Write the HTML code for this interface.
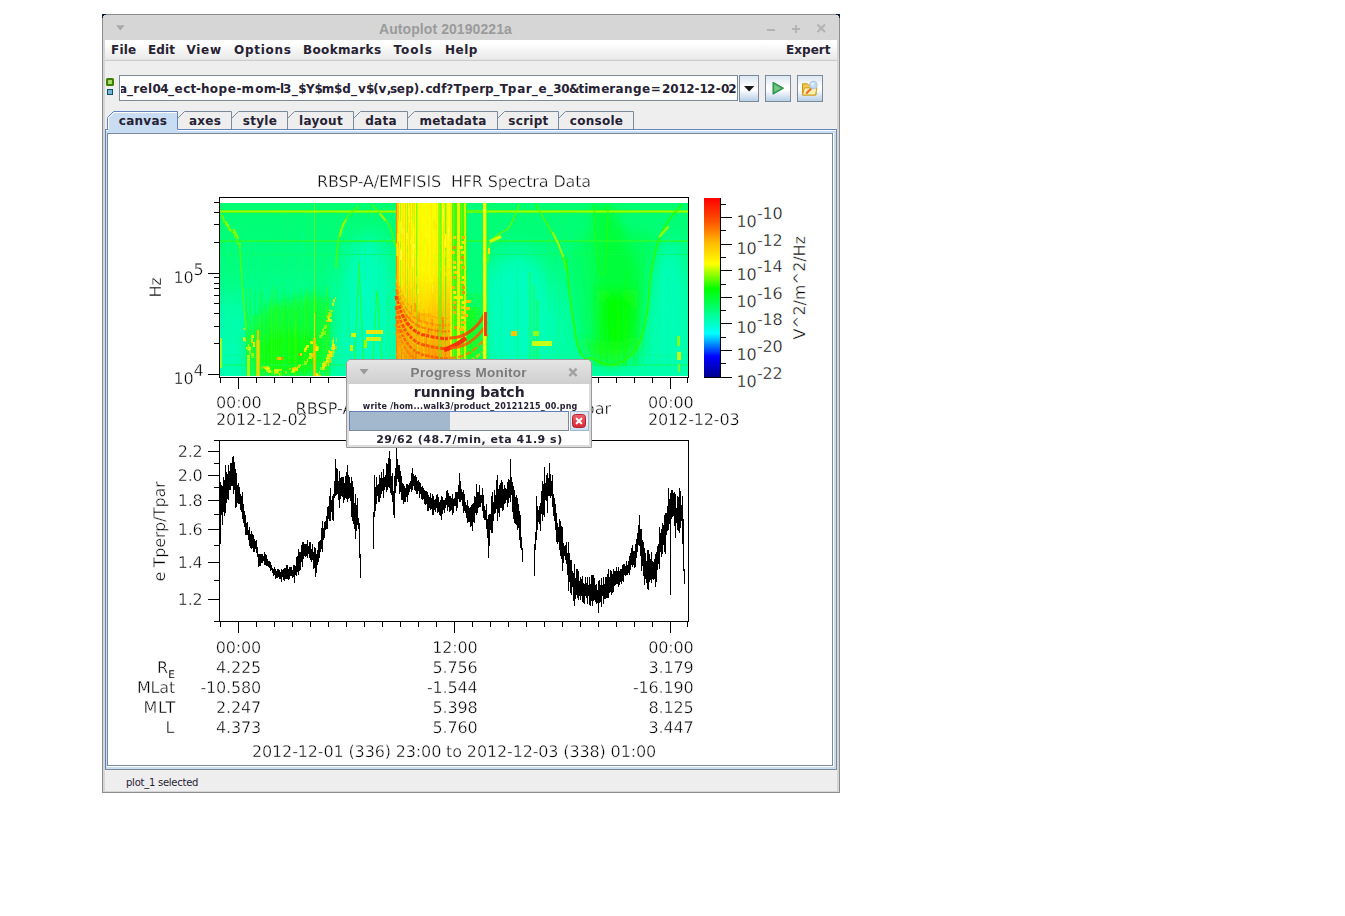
<!DOCTYPE html>
<html><head><meta charset="utf-8"><title>Autoplot 20190221a</title>
<style>
html,body{margin:0;padding:0;background:#fff;}
body{width:1345px;height:916px;position:relative;overflow:hidden;font-family:'DejaVu Sans','Liberation Sans',sans-serif;}
.a{position:absolute;}
#win{left:102px;top:14px;width:736px;height:777px;border:1px solid #8c8c8c;background:#d6d6d6;}
#inner{left:105px;top:40px;width:732px;height:751px;background:#eeeeee;}
#wt{left:379px;letter-spacing:0.08px;top:15px;width:200px;height:25px;text-align:left;color:#9b9b9b;font:bold 14px 'Liberation Sans','DejaVu Sans',sans-serif;line-height:28px;}
#menubar{left:105px;top:40px;width:732px;height:20px;background:linear-gradient(#ffffff,#ffffff 15%,#e9e9e9 95%,#dedede);border-bottom:1px solid #cccccc;}
.m{position:absolute;top:41px;height:20px;line-height:19px;font-weight:bold;font-size:12px;letter-spacing:0.22px;color:#262133;white-space:nowrap;}
.b{font-weight:bold;font-size:12px;color:#262133;white-space:nowrap;}
#url{left:119px;top:75px;width:617px;height:24px;border:1px solid #7a8a99;background:#fff;overflow:hidden;}
#url span{position:absolute;right:1px;top:0;line-height:25px;letter-spacing:0.3px;}
.btn{border:1px solid #7a8a99;background:linear-gradient(#dbe6f2,#ffffff 45%,#ffffff 55%,#b8cfe5);box-sizing:border-box;}
.tab{position:absolute;top:111px;height:19px;}
.tab span{position:absolute;left:0;right:0;top:1px;text-align:center;line-height:19px;letter-spacing:0.28px;}
#status{left:126px;top:777px;font-size:10px;color:#262133;line-height:12px;letter-spacing:-0.25px;}
#dlg{left:346px;top:359px;width:244px;height:87px;border:1px solid #9a9a9a;border-radius:5px 5px 0 0;background:#dcdcdc;}
#dlgt{left:347px;top:360px;width:244px;height:24px;border-radius:4px 4px 0 0;background:linear-gradient(#e4e4e4,#cfcfcf);}
#dlgc{left:349px;top:384px;width:240px;height:61px;background:#fff;}
</style></head>
<body>
<div class="a" id="win"></div>
<svg class="a" style="left:102px;top:14px" width="738" height="4" viewBox="0 0 738 4" shape-rendering="crispEdges"><path d="M0 0h4v1h-2v1h-1v2h-1z" fill="#0c1e3c"/><path d="M738 0h-4v1h2v1h1v2h1z" fill="#0c1e3c"/><path d="M1 1h3v0h-3z" fill="#fff"/></svg>
<div class="a" id="inner"></div>
<div class="a" id="wt">Autoplot 20190221a</div>
<svg class="a" style="left:102px;top:15px" width="738" height="25" viewBox="102 15 738 25"><path d="M116 25.3h8.6l-4.3 5.2z" fill="#a9a9a9"/><path d="M767 30h8" stroke="#b2b2b2" stroke-width="2"/><path d="M792 29h8M796 25v8" stroke="#b2b2b2" stroke-width="1.8"/><path d="M817.5 24.5l7.5 7.5M825 24.5l-7.5 7.5" stroke="#b2b2b2" stroke-width="2"/></svg>
<div class="a" id="menubar"></div>
<div class="m" style="left:111px;letter-spacing:0.2px">File</div>
<div class="m" style="left:148px;letter-spacing:0.1px">Edit</div>
<div class="m" style="left:186.5px;letter-spacing:0.7px">View</div>
<div class="m" style="left:234px;letter-spacing:0.7px">Options</div>
<div class="m" style="left:303px;letter-spacing:0.35px">Bookmarks</div>
<div class="m" style="left:393.5px;letter-spacing:1.0px">Tools</div>
<div class="m" style="left:445px;letter-spacing:0.5px">Help</div>
<div class="m" style="left:786px;letter-spacing:0.05px">Expert</div>
<div class="a" style="left:106px;top:78px;width:4px;height:4px;border:2px solid #3f7f00;background:#a6d96a;border-radius:1.5px"></div>
<div class="a" style="left:107px;top:89px;width:4px;height:4px;border:1px solid #0e4f6e;background:#79b4d6"></div>
<div class="a b" id="url"></div>
<svg class="a" style="left:121px;top:76px" width="616" height="24" viewBox="121 76 616 24" font-family="'DejaVu Sans','Liberation Sans',sans-serif" font-weight="bold" font-size="12" fill="#262133"><text y="93" x="118.9 126.9 133.2 139.4 147.9 152.4 160.3 168.1 174.6 183.2 190.4 196.1 201.1 209.8 218.5 227.8 236.6 241.6 255.2 263.7 275.4 280.0 283.1 291.7 298.3 306.1 314.4 321.7 334.1 342.2 350.9 358.1 366.0 373.2 378.5 386.7 390.0 396.8 405.3 413.8 419.8 425.4 432.3 441.2 446.3 453.6 461.7 470.8 479.3 485.1 493.6 499.8 507.7 517.2 525.7 531.8 538.5 546.7 553.3 561.3 568.9 578.4 584.3 588.0 601.2 609.3 615.5 624.0 633.1 642.0 650.7 662.1 670.2 678.4 686.2 694.5 699.6 707.1 715.8 721.1 728.3">a_rel04_ect-hope-mom-l3_$Y$m$d_v$(v,sep).cdf?Tperp_Tpar_e_30&amp;timerange=2012-12-02</text></svg>
<div class="a btn" style="left:739px;top:75px;width:20px;height:27px"></div>
<svg class="a" style="left:739px;top:75px" width="20" height="27"><path d="M5 11h10.4l-5.2 5.6z" fill="#1a1a1a"/></svg>
<div class="a btn" style="left:765px;top:75px;width:26px;height:27px"></div>
<svg class="a" style="left:765px;top:75px" width="26" height="27"><path d="M8 7.2L18.6 13.2L8 19.2Z" fill="#3fa85a" stroke="#2b8a45" stroke-width="1" stroke-linejoin="round"/><path d="M9.3 9.6L15.6 13.2L9.3 16.9Z" fill="#74c884"/></svg>
<div class="a btn" style="left:797px;top:75px;width:26px;height:27px"></div>
<svg class="a" style="left:797px;top:75px" width="26" height="27"><path d="M5.5 8.8h5l1.5 1.6h7v9.6h-13.5z" fill="#f3c64f" stroke="#c79a13" stroke-width="1"/><path d="M5.5 20l2-7.2h12.4l-1.4 7.2z" fill="#fdf0b0" stroke="#d1a21c" stroke-width="1"/><path d="M9.8 18l4.6-4.8" stroke="#e8702a" stroke-width="2.2" stroke-linecap="round" stroke-dasharray="1.6 0.7"/><circle cx="16.4" cy="10" r="3.7" fill="#bcdcfa" stroke="#b9c4d2" stroke-width="1.1"/><circle cx="15.6" cy="9.2" r="1.6" fill="#e4f1fd"/></svg>
<div class="a" style="left:105px;top:129px;width:732px;height:641px;background:#c8ddf2"></div>
<div class="a" style="left:105px;top:129px;width:732px;height:1px;background:#6382bf"></div>
<div class="a" style="left:105px;top:129px;width:1px;height:641px;background:#6382bf"></div>
<div class="a" style="left:836px;top:129px;width:1px;height:641px;background:#7a8a99"></div>
<div class="a" style="left:105px;top:769px;width:732px;height:1px;background:#7a8a99"></div>
<div class="a" style="left:178px;top:130px;width:658px;height:1px;background:#ffffff"></div><div class="a" style="left:106px;top:130px;width:2px;height:1px;background:#ffffff"></div>
<div class="a" style="left:833px;top:133px;width:1px;height:634px;background:#ffffff"></div>
<div class="a" style="left:107px;top:766px;width:727px;height:1px;background:#ffffff"></div>
<div class="a" style="left:107px;top:133px;width:724px;height:631px;border:1px solid #7a8a99;background:#fff"></div>
<svg class="a" style="left:100px;top:105px" width="560" height="30" viewBox="100 105 560 30" shape-rendering="crispEdges"><path d="M107.5 130V117.5L113.5 111.5H177.5V130Z" fill="#c8ddf2" stroke="none"/><path d="M108.5 129V118L114 112.5H177" fill="none" stroke="#ffffff" stroke-width="1" shape-rendering="auto"/><path d="M107.5 129V117.5L113.5 111.5H177.5V129.5" fill="none" stroke="#6382bf" stroke-width="1" shape-rendering="auto"/><path d="M177.5 118.5L184.5 111.5H231.5V129" fill="none" stroke="#7a8a99" stroke-width="1" shape-rendering="auto"/><path d="M231.5 118.5L238.5 111.5H287.5V129" fill="none" stroke="#7a8a99" stroke-width="1" shape-rendering="auto"/><path d="M287.5 118.5L294.5 111.5H353.5V129" fill="none" stroke="#7a8a99" stroke-width="1" shape-rendering="auto"/><path d="M353.5 118.5L360.5 111.5H407.5V129" fill="none" stroke="#7a8a99" stroke-width="1" shape-rendering="auto"/><path d="M407.5 118.5L414.5 111.5H497.5V129" fill="none" stroke="#7a8a99" stroke-width="1" shape-rendering="auto"/><path d="M497.5 118.5L504.5 111.5H558.5V129" fill="none" stroke="#7a8a99" stroke-width="1" shape-rendering="auto"/><path d="M558.5 118.5L565.5 111.5H633.5V129" fill="none" stroke="#7a8a99" stroke-width="1" shape-rendering="auto"/></svg>
<div class="tab b" style="left:108px;width:70px"><span>canvas</span></div>
<div class="tab b" style="left:178px;width:54px"><span>axes</span></div>
<div class="tab b" style="left:232px;width:56px"><span>style</span></div>
<div class="tab b" style="left:288px;width:66px"><span>layout</span></div>
<div class="tab b" style="left:354px;width:54px"><span>data</span></div>
<div class="tab b" style="left:408px;width:90px"><span>metadata</span></div>
<div class="tab b" style="left:498px;width:61px"><span>script</span></div>
<div class="tab b" style="left:559px;width:75px"><span>console</span></div>
<div class="a" id="status">plot_1 selected</div>
<div class="a" style="left:108px;top:134px;width:724px;height:631px;overflow:hidden"><svg id="cv" width="724" height="631" viewBox="108 134 724 631" font-family="'DejaVu Sans','Liberation Sans',sans-serif" font-size="16" letter-spacing="-0.17" fill="#000" shape-rendering="crispEdges" text-rendering="geometricPrecision">
<defs>
<linearGradient id="cb" x1="0" y1="1" x2="0" y2="0">
<stop offset="0" stop-color="#000089"/><stop offset="0.1176" stop-color="#0000ff"/><stop offset="0.247" stop-color="#00ffff"/>
<stop offset="0.494" stop-color="#00ff00"/><stop offset="0.635" stop-color="#ffff00"/><stop offset="0.753" stop-color="#ffb900"/>
<stop offset="0.867" stop-color="#ff5400"/><stop offset="1" stop-color="#ff0000"/></linearGradient>
<linearGradient id="bg" x1="0" y1="0" x2="0" y2="1"><stop offset="0" stop-color="#00ff70"/><stop offset="0.4" stop-color="#00ff82"/><stop offset="0.7" stop-color="#00ff9c"/><stop offset="1" stop-color="#00ffa8"/></linearGradient>
<filter id="b3" x="-20%" y="-20%" width="140%" height="140%"><feGaussianBlur stdDeviation="3"/></filter>
<filter id="b6" x="-30%" y="-30%" width="160%" height="160%"><feGaussianBlur stdDeviation="6"/></filter>
<filter id="b10" x="-40%" y="-40%" width="180%" height="180%"><feGaussianBlur stdDeviation="10"/></filter>
<filter id="b1" x="-20%" y="-20%" width="140%" height="140%"><feGaussianBlur stdDeviation="0.7"/></filter>
<clipPath id="sc"><rect x="220" y="203" width="468" height="173"/></clipPath>
<linearGradient id="ow" x1="0" y1="0" x2="0" y2="1"><stop offset="0" stop-color="#ff9800" stop-opacity="0"/><stop offset="0.45" stop-color="#ff9800" stop-opacity="0.3"/><stop offset="1" stop-color="#ff8800" stop-opacity="0.4"/></linearGradient>
<linearGradient id="hot" x1="0" y1="0" x2="0" y2="1"><stop offset="0" stop-color="#f8ff00"/><stop offset="0.45" stop-color="#fff000"/><stop offset="0.7" stop-color="#ffd000"/><stop offset="0.85" stop-color="#ffb000"/><stop offset="1" stop-color="#ff8a00"/></linearGradient>
</defs>
<g clip-path="url(#sc)" shape-rendering="auto">
<rect x="220" y="203" width="468" height="173" fill="url(#bg)"/>
<g filter="url(#b10)">
<ellipse cx="226" cy="340" rx="18" ry="45" fill="#00ffb2"/>
<ellipse cx="368" cy="312" rx="26" ry="78" fill="#00ffbe"/>
<ellipse cx="516" cy="318" rx="38" ry="66" fill="#00ffbc"/>
<ellipse cx="578" cy="300" rx="10" ry="45" fill="#00ffac"/>
<ellipse cx="668" cy="308" rx="22" ry="66" fill="#00ffb8"/>
</g>
<g filter="url(#b6)">
<path d="M248 340 Q256 312 272 304 L318 294 Q330 300 331 322 L326 376 L252 376Z" fill="#08ff28" opacity="0.85"/>
<ellipse cx="290" cy="354" rx="32" ry="24" fill="#10ff10" opacity="0.9"/>
<path d="M568 262 Q571 300 577 332 T594 358 Q606 367 616 364 Q634 358 641 338 T650 280 Q654 250 661 236 L640 230 L600 225 L575 240Z" fill="#00ff54" opacity="0.75"/>
<path d="M592 205 L612 205 L636 262 L640 262 Q642 330 632 352 L600 356 Q594 320 596 262Z" fill="#08ff30" opacity="0.8"/>
<path d="M598 290 L638 290 Q640 330 630 350 L602 352 Q597 320 598 290Z" fill="#08ff10"/>
<ellipse cx="616" cy="322" rx="17" ry="26" fill="#06ff06"/>
<path d="M578 335 Q590 362 612 366 Q636 360 644 335 L630 345 L596 345Z" fill="#14ff20"/>
<rect x="467" y="300" width="15" height="76" fill="#18ff18"/><rect x="450" y="215" width="15" height="160" fill="#20ff18"/>
</g>
<rect x="303" y="340" width="1" height="36" fill="#40ff00" opacity="0.31"/><rect x="321" y="297" width="1" height="79" fill="#00ff30" opacity="0.40"/><rect x="306" y="325" width="1" height="51" fill="#00ff30" opacity="0.22"/><rect x="284" y="294" width="1" height="82" fill="#30ff00" opacity="0.33"/><rect x="327" y="287" width="1" height="89" fill="#40ff00" opacity="0.44"/><rect x="329" y="332" width="1" height="44" fill="#00ff30" opacity="0.36"/><rect x="313" y="289" width="1" height="87" fill="#30ff00" opacity="0.21"/><rect x="276" y="323" width="1" height="53" fill="#30ff00" opacity="0.39"/><rect x="287" y="313" width="1" height="63" fill="#00ff30" opacity="0.33"/><rect x="327" y="303" width="1" height="73" fill="#40ff00" opacity="0.20"/><rect x="256" y="314" width="1" height="62" fill="#20ff10" opacity="0.30"/><rect x="316" y="338" width="1" height="38" fill="#30ff00" opacity="0.38"/><rect x="286" y="333" width="1" height="43" fill="#00ff30" opacity="0.33"/><rect x="249" y="289" width="1" height="87" fill="#30ff00" opacity="0.30"/><rect x="283" y="309" width="1" height="67" fill="#30ff00" opacity="0.44"/><rect x="246" y="298" width="1" height="78" fill="#00ff30" opacity="0.43"/><rect x="252" y="315" width="1" height="61" fill="#40ff00" opacity="0.45"/><rect x="296" y="311" width="1" height="65" fill="#30ff00" opacity="0.34"/><rect x="271" y="334" width="1" height="42" fill="#20ff10" opacity="0.28"/><rect x="285" y="306" width="1" height="70" fill="#30ff00" opacity="0.44"/><rect x="261" y="293" width="1" height="83" fill="#00ff30" opacity="0.38"/><rect x="247" y="288" width="1" height="88" fill="#40ff00" opacity="0.40"/><rect x="268" y="328" width="1" height="48" fill="#00ff30" opacity="0.31"/><rect x="270" y="331" width="1" height="45" fill="#00ff30" opacity="0.30"/><rect x="295" y="292" width="1" height="84" fill="#40ff00" opacity="0.31"/><rect x="273" y="285" width="1" height="91" fill="#20ff10" opacity="0.42"/><rect x="321" y="304" width="1" height="72" fill="#30ff00" opacity="0.25"/><rect x="296" y="339" width="1" height="37" fill="#30ff00" opacity="0.21"/><rect x="264" y="298" width="1" height="78" fill="#40ff00" opacity="0.26"/><rect x="324" y="306" width="1" height="70" fill="#20ff10" opacity="0.30"/><rect x="255" y="290" width="1" height="86" fill="#00ff30" opacity="0.35"/><rect x="277" y="285" width="1" height="91" fill="#20ff10" opacity="0.29"/><rect x="304" y="293" width="1" height="83" fill="#40ff00" opacity="0.41"/><rect x="263" y="340" width="1" height="36" fill="#40ff00" opacity="0.25"/><rect x="265" y="304" width="1" height="72" fill="#00ff30" opacity="0.40"/><rect x="277" y="331" width="1" height="45" fill="#00ff30" opacity="0.24"/><rect x="326" y="320" width="1" height="56" fill="#00ff30" opacity="0.37"/><rect x="295" y="315" width="1" height="61" fill="#30ff00" opacity="0.31"/><rect x="259" y="291" width="1" height="85" fill="#30ff00" opacity="0.33"/><rect x="278" y="300" width="1" height="76" fill="#40ff00" opacity="0.26"/><rect x="322" y="316" width="1" height="60" fill="#20ff10" opacity="0.33"/><rect x="254" y="293" width="1" height="83" fill="#00ff30" opacity="0.32"/><rect x="329" y="339" width="1" height="37" fill="#30ff00" opacity="0.27"/><rect x="272" y="332" width="1" height="44" fill="#30ff00" opacity="0.22"/><rect x="298" y="313" width="1" height="63" fill="#00ff30" opacity="0.22"/><rect x="268" y="303" width="1" height="73" fill="#20ff10" opacity="0.33"/><rect x="262" y="290" width="1" height="86" fill="#20ff10" opacity="0.23"/><rect x="303" y="306" width="1" height="70" fill="#00ff30" opacity="0.35"/><rect x="248" y="315" width="1" height="61" fill="#20ff10" opacity="0.38"/><rect x="250" y="286" width="1" height="90" fill="#30ff00" opacity="0.32"/><rect x="285" y="305" width="1" height="71" fill="#00ff30" opacity="0.45"/><rect x="255" y="313" width="1" height="63" fill="#20ff10" opacity="0.38"/><rect x="262" y="335" width="1" height="41" fill="#20ff10" opacity="0.29"/><rect x="306" y="289" width="1" height="87" fill="#40ff00" opacity="0.44"/><rect x="249" y="340" width="1" height="36" fill="#40ff00" opacity="0.34"/><rect x="325" y="327" width="1" height="49" fill="#40ff00" opacity="0.29"/><rect x="247" y="323" width="1" height="53" fill="#30ff00" opacity="0.22"/><rect x="327" y="292" width="1" height="84" fill="#20ff10" opacity="0.42"/><rect x="288" y="309" width="1" height="67" fill="#40ff00" opacity="0.31"/><rect x="315" y="290" width="1" height="86" fill="#30ff00" opacity="0.28"/><rect x="257" y="315" width="1" height="61" fill="#30ff00" opacity="0.26"/><rect x="260" y="316" width="1" height="60" fill="#40ff00" opacity="0.26"/><rect x="247" y="308" width="1" height="68" fill="#20ff10" opacity="0.24"/><rect x="324" y="297" width="1" height="79" fill="#00ff30" opacity="0.39"/><rect x="289" y="327" width="1" height="49" fill="#40ff00" opacity="0.32"/><rect x="276" y="305" width="1" height="71" fill="#40ff00" opacity="0.37"/><rect x="271" y="325" width="1" height="51" fill="#40ff00" opacity="0.40"/><rect x="271" y="298" width="1" height="78" fill="#40ff00" opacity="0.25"/><rect x="286" y="298" width="1" height="78" fill="#00ff30" opacity="0.23"/><rect x="290" y="338" width="1" height="38" fill="#30ff00" opacity="0.38"/><rect x="281" y="337" width="1" height="39" fill="#00ff30" opacity="0.23"/><rect x="306" y="302" width="1" height="74" fill="#00ff30" opacity="0.41"/><rect x="294" y="325" width="1" height="51" fill="#40ff00" opacity="0.37"/><rect x="325" y="313" width="1" height="63" fill="#20ff10" opacity="0.22"/><rect x="250" y="302" width="1" height="74" fill="#30ff00" opacity="0.37"/><rect x="281" y="321" width="1" height="55" fill="#20ff10" opacity="0.28"/><rect x="318" y="286" width="1" height="90" fill="#00ff30" opacity="0.30"/><rect x="270" y="286" width="1" height="90" fill="#20ff10" opacity="0.26"/><rect x="264" y="335" width="1" height="41" fill="#30ff00" opacity="0.45"/><rect x="260" y="313" width="1" height="63" fill="#30ff00" opacity="0.36"/><rect x="329" y="325" width="1" height="51" fill="#20ff10" opacity="0.44"/><rect x="271" y="297" width="1" height="79" fill="#40ff00" opacity="0.26"/><rect x="247" y="333" width="1" height="43" fill="#40ff00" opacity="0.33"/><rect x="250" y="296" width="1" height="80" fill="#00ff30" opacity="0.27"/><rect x="290" y="319" width="1" height="57" fill="#00ff30" opacity="0.30"/><rect x="274" y="290" width="1" height="86" fill="#40ff00" opacity="0.43"/><rect x="295" y="293" width="1" height="83" fill="#40ff00" opacity="0.31"/><rect x="326" y="285" width="1" height="91" fill="#40ff00" opacity="0.34"/><rect x="329" y="317" width="1" height="59" fill="#20ff10" opacity="0.32"/><rect x="329" y="298" width="1" height="78" fill="#30ff00" opacity="0.38"/><rect x="633" y="329" width="1" height="37" fill="#10ff10" opacity="0.23"/><rect x="607" y="327" width="1" height="39" fill="#00ff30" opacity="0.45"/><rect x="611" y="304" width="1" height="62" fill="#00ff30" opacity="0.27"/><rect x="637" y="324" width="1" height="42" fill="#20ff00" opacity="0.29"/><rect x="597" y="272" width="1" height="94" fill="#00ff30" opacity="0.29"/><rect x="618" y="319" width="1" height="47" fill="#00ff30" opacity="0.32"/><rect x="593" y="283" width="1" height="83" fill="#20ff00" opacity="0.31"/><rect x="594" y="281" width="1" height="85" fill="#10ff10" opacity="0.28"/><rect x="642" y="328" width="1" height="38" fill="#20ff00" opacity="0.32"/><rect x="625" y="327" width="1" height="39" fill="#10ff10" opacity="0.33"/><rect x="635" y="314" width="1" height="52" fill="#00ff30" opacity="0.44"/><rect x="623" y="307" width="1" height="59" fill="#10ff10" opacity="0.22"/><rect x="606" y="298" width="1" height="68" fill="#10ff10" opacity="0.34"/><rect x="638" y="305" width="1" height="61" fill="#10ff10" opacity="0.24"/><rect x="624" y="323" width="1" height="43" fill="#10ff10" opacity="0.26"/><rect x="634" y="294" width="1" height="72" fill="#10ff10" opacity="0.25"/><rect x="601" y="304" width="1" height="62" fill="#10ff10" opacity="0.27"/><rect x="623" y="282" width="1" height="84" fill="#00ff30" opacity="0.33"/><rect x="624" y="270" width="1" height="96" fill="#10ff10" opacity="0.29"/><rect x="626" y="272" width="1" height="94" fill="#10ff10" opacity="0.43"/><rect x="626" y="321" width="1" height="45" fill="#10ff10" opacity="0.23"/><rect x="597" y="314" width="1" height="52" fill="#20ff00" opacity="0.22"/><rect x="626" y="299" width="1" height="67" fill="#00ff30" opacity="0.43"/><rect x="617" y="287" width="1" height="79" fill="#20ff00" opacity="0.32"/><rect x="600" y="291" width="1" height="75" fill="#00ff30" opacity="0.43"/><rect x="622" y="303" width="1" height="63" fill="#00ff30" opacity="0.23"/><rect x="618" y="309" width="1" height="57" fill="#20ff00" opacity="0.43"/><rect x="600" y="314" width="1" height="52" fill="#20ff00" opacity="0.21"/><rect x="601" y="284" width="1" height="82" fill="#20ff00" opacity="0.37"/><rect x="612" y="316" width="1" height="50" fill="#00ff30" opacity="0.26"/><rect x="623" y="276" width="1" height="90" fill="#00ff30" opacity="0.38"/><rect x="599" y="324" width="1" height="42" fill="#10ff10" opacity="0.36"/><rect x="637" y="282" width="1" height="84" fill="#10ff10" opacity="0.33"/><rect x="619" y="271" width="1" height="95" fill="#00ff30" opacity="0.36"/><rect x="625" y="309" width="1" height="57" fill="#20ff00" opacity="0.33"/><rect x="632" y="304" width="1" height="62" fill="#10ff10" opacity="0.25"/><rect x="605" y="324" width="1" height="42" fill="#10ff10" opacity="0.35"/><rect x="600" y="284" width="1" height="82" fill="#10ff10" opacity="0.36"/><rect x="614" y="327" width="1" height="39" fill="#20ff00" opacity="0.28"/><rect x="612" y="327" width="1" height="39" fill="#20ff00" opacity="0.25"/><rect x="269" y="233" width="1" height="46" fill="#00ffa0" opacity="0.17"/><rect x="512" y="256" width="1" height="99" fill="#00ffa0" opacity="0.18"/><rect x="323" y="215" width="1" height="55" fill="#00ffa0" opacity="0.29"/><rect x="517" y="267" width="1" height="117" fill="#00ff50" opacity="0.31"/><rect x="343" y="207" width="1" height="100" fill="#00ffa0" opacity="0.25"/><rect x="365" y="227" width="1" height="53" fill="#00ff50" opacity="0.19"/><rect x="260" y="277" width="1" height="37" fill="#00ff50" opacity="0.34"/><rect x="338" y="244" width="1" height="80" fill="#20ff40" opacity="0.24"/><rect x="310" y="279" width="1" height="77" fill="#00ff50" opacity="0.28"/><rect x="230" y="255" width="1" height="88" fill="#20ff40" opacity="0.30"/><rect x="323" y="215" width="1" height="95" fill="#00ff50" opacity="0.21"/><rect x="668" y="275" width="1" height="106" fill="#00ff50" opacity="0.25"/><rect x="683" y="238" width="1" height="44" fill="#00ffa0" opacity="0.30"/><rect x="260" y="245" width="1" height="98" fill="#00ffa0" opacity="0.22"/><rect x="330" y="254" width="1" height="56" fill="#00ffa0" opacity="0.19"/><rect x="565" y="215" width="1" height="31" fill="#20ff40" opacity="0.35"/><rect x="379" y="237" width="1" height="115" fill="#20ff40" opacity="0.22"/><rect x="388" y="271" width="1" height="39" fill="#20ff40" opacity="0.25"/><rect x="347" y="292" width="1" height="45" fill="#20ff40" opacity="0.35"/><rect x="225" y="297" width="1" height="60" fill="#20ff40" opacity="0.24"/><rect x="349" y="285" width="1" height="78" fill="#00ff50" opacity="0.17"/><rect x="558" y="273" width="1" height="99" fill="#00ffa0" opacity="0.23"/><rect x="353" y="284" width="1" height="86" fill="#00ffa0" opacity="0.17"/><rect x="372" y="252" width="1" height="50" fill="#20ff40" opacity="0.24"/><rect x="263" y="257" width="1" height="93" fill="#20ff40" opacity="0.21"/><rect x="641" y="249" width="1" height="97" fill="#20ff40" opacity="0.25"/><rect x="631" y="287" width="1" height="67" fill="#00ff50" opacity="0.15"/><rect x="282" y="284" width="1" height="50" fill="#20ff40" opacity="0.30"/><rect x="501" y="298" width="1" height="80" fill="#00ff50" opacity="0.27"/><rect x="301" y="257" width="1" height="91" fill="#20ff40" opacity="0.34"/><rect x="282" y="295" width="1" height="89" fill="#00ff50" opacity="0.35"/><rect x="282" y="209" width="1" height="109" fill="#20ff40" opacity="0.24"/><rect x="501" y="270" width="1" height="49" fill="#00ff50" opacity="0.22"/><rect x="658" y="261" width="1" height="106" fill="#20ff40" opacity="0.28"/><rect x="595" y="298" width="1" height="97" fill="#00ff50" opacity="0.34"/><rect x="549" y="217" width="1" height="94" fill="#20ff40" opacity="0.31"/><rect x="579" y="237" width="1" height="108" fill="#00ffa0" opacity="0.30"/><rect x="536" y="299" width="1" height="60" fill="#00ff50" opacity="0.34"/><rect x="348" y="290" width="1" height="35" fill="#00ffa0" opacity="0.16"/><rect x="554" y="206" width="1" height="109" fill="#00ff50" opacity="0.17"/><rect x="358" y="299" width="1" height="41" fill="#00ffa0" opacity="0.18"/><rect x="649" y="264" width="1" height="91" fill="#20ff40" opacity="0.19"/><rect x="307" y="212" width="1" height="45" fill="#20ff40" opacity="0.31"/><rect x="379" y="259" width="1" height="84" fill="#00ffa0" opacity="0.20"/><rect x="258" y="286" width="1" height="106" fill="#20ff40" opacity="0.21"/><rect x="597" y="277" width="1" height="42" fill="#20ff40" opacity="0.33"/><rect x="240" y="258" width="1" height="102" fill="#00ffa0" opacity="0.25"/><rect x="606" y="204" width="1" height="39" fill="#20ff40" opacity="0.19"/><rect x="389" y="291" width="1" height="68" fill="#20ff40" opacity="0.29"/><rect x="303" y="231" width="1" height="75" fill="#00ffa0" opacity="0.30"/><rect x="518" y="293" width="1" height="86" fill="#00ffa0" opacity="0.27"/><rect x="559" y="270" width="1" height="69" fill="#20ff40" opacity="0.21"/><rect x="322" y="213" width="1" height="76" fill="#20ff40" opacity="0.15"/><rect x="589" y="227" width="1" height="102" fill="#20ff40" opacity="0.31"/><rect x="358" y="225" width="1" height="41" fill="#20ff40" opacity="0.33"/><rect x="292" y="269" width="1" height="37" fill="#00ffa0" opacity="0.18"/><rect x="493" y="211" width="1" height="104" fill="#00ffa0" opacity="0.21"/><rect x="509" y="213" width="1" height="65" fill="#00ffa0" opacity="0.17"/><rect x="300" y="284" width="1" height="113" fill="#00ff50" opacity="0.17"/><rect x="386" y="294" width="1" height="58" fill="#20ff40" opacity="0.30"/>
<rect x="220" y="210" width="468" height="3" fill="#70ff00" opacity="0.85"/>
<rect x="220" y="211" width="468" height="1" fill="#a0ff00"/>
<rect x="220" y="240" width="468" height="2" fill="#28ff30" opacity="0.8"/>
<rect x="220" y="254" width="468" height="1" fill="#10ff50" opacity="0.55"/>
<rect x="220" y="364" width="468" height="2" fill="#10ff50" opacity="0.45"/>
<rect x="220" y="355" width="468" height="1" fill="#10ff60" opacity="0.3"/>
<g fill="none" stroke-linecap="round">
<path d="M221 214 Q227 226 232 232 T240 250 Q242 290 246 328" stroke="#58ff00" stroke-width="1.6" opacity="0.8"/>
<path d="M226 222 l4 8 M234 230 l4 8" stroke="#a0ff00" stroke-width="2.2" opacity="0.8"/>
<path d="M336 268 Q337 235 343 224 T358 207" stroke="#50ff00" stroke-width="1.6" opacity="0.85"/>
<path d="M340 236 Q342 226 346 220" stroke="#b0ff00" stroke-width="2" opacity="0.8"/>
<path d="M372 205 Q380 212 386 220 T395 246" stroke="#58ff00" stroke-width="1.6" opacity="0.85"/>
<path d="M380 214 l5 6" stroke="#c0ff00" stroke-width="2" opacity="0.8"/>
<path d="M354 376 L359 262 L364 376 M372 376 L377 290 L383 376" stroke="#28ff20" stroke-width="1.3" opacity="0.7"/>
<path d="M488 262 Q488 246 491 241 T508 229 Q514 220 519 205" stroke="#60ff00" stroke-width="1.6" opacity="0.85"/>
<path d="M491 241 l9 -4" stroke="#e0ff00" stroke-width="3.2" opacity="0.9"/>
<path d="M536 205 Q546 222 554 236 T566 270" stroke="#50ff00" stroke-width="1.6" opacity="0.85"/>
<path d="M553 233 Q559 244 563 256" stroke="#b8ff00" stroke-width="2" opacity="0.85"/>
<path d="M566 258 Q570 300 575 332 T592 358 Q606 367 616 364 Q634 358 641 338 T650 280 Q654 250 661 234 T682 205" stroke="#28ff00" stroke-width="2.2" opacity="0.8"/>
<path d="M594 205 Q595 240 599 275 M608 205 Q608 240 604 275" stroke="#20ff10" stroke-width="2" opacity="0.55"/>
<path d="M660 236 l8 -9" stroke="#b0ff00" stroke-width="2.5" opacity="0.85"/>
<path d="M530 272 V376 M534 285 V376 M538 300 V376" stroke="#28ff20" stroke-width="1.2" opacity="0.75"/>
</g>
<rect x="312" y="354" width="3" height="4" fill="#ffd000" opacity="0.51"/><rect x="294" y="371" width="1" height="2" fill="#c0ff00" opacity="0.71"/><rect x="258" y="362" width="1" height="4" fill="#e8ff00" opacity="0.68"/><rect x="253" y="353" width="1" height="2" fill="#ffd000" opacity="0.78"/><rect x="246" y="347" width="1" height="2" fill="#e8ff00" opacity="0.89"/><rect x="266" y="366" width="3" height="4" fill="#e8ff00" opacity="0.58"/><rect x="332" y="303" width="2" height="3" fill="#ffff00" opacity="0.66"/><rect x="249" y="350" width="2" height="4" fill="#ffd000" opacity="0.50"/><rect x="315" y="344" width="2" height="3" fill="#a0ff00" opacity="0.64"/><rect x="295" y="367" width="1" height="4" fill="#c0ff00" opacity="0.88"/><rect x="243" y="328" width="3" height="2" fill="#ffe000" opacity="0.52"/><rect x="253" y="353" width="1" height="3" fill="#c0ff00" opacity="0.73"/><rect x="329" y="313" width="3" height="4" fill="#80ff00" opacity="0.86"/><rect x="326" y="320" width="1" height="2" fill="#c0ff00" opacity="0.73"/><rect x="274" y="369" width="3" height="4" fill="#ffff00" opacity="0.64"/><rect x="267" y="366" width="1" height="4" fill="#a0ff00" opacity="0.64"/><rect x="295" y="367" width="3" height="4" fill="#ffe000" opacity="0.51"/><rect x="319" y="335" width="3" height="3" fill="#e8ff00" opacity="0.53"/><rect x="329" y="309" width="1" height="2" fill="#a0ff00" opacity="0.75"/><rect x="249" y="346" width="1" height="3" fill="#c0ff00" opacity="0.57"/><rect x="326" y="320" width="3" height="2" fill="#ffd000" opacity="0.70"/><rect x="296" y="368" width="2" height="3" fill="#ffe000" opacity="0.91"/><rect x="248" y="344" width="1" height="4" fill="#ffe000" opacity="0.89"/><rect x="251" y="354" width="3" height="4" fill="#c0ff00" opacity="0.53"/><rect x="323" y="328" width="1" height="3" fill="#c0ff00" opacity="0.75"/><rect x="316" y="346" width="3" height="4" fill="#c0ff00" opacity="0.93"/><rect x="271" y="370" width="2" height="4" fill="#80ff00" opacity="0.61"/><rect x="315" y="347" width="3" height="4" fill="#80ff00" opacity="0.66"/><rect x="261" y="366" width="2" height="3" fill="#80ff00" opacity="0.58"/><rect x="328" y="316" width="2" height="4" fill="#e8ff00" opacity="0.74"/><rect x="251" y="353" width="2" height="3" fill="#a0ff00" opacity="0.54"/><rect x="314" y="347" width="3" height="4" fill="#a0ff00" opacity="0.92"/><rect x="266" y="368" width="2" height="4" fill="#ffff00" opacity="0.59"/><rect x="308" y="357" width="3" height="2" fill="#a0ff00" opacity="0.82"/><rect x="335" y="297" width="1" height="2" fill="#c0ff00" opacity="0.94"/><rect x="295" y="368" width="2" height="3" fill="#a0ff00" opacity="0.78"/><rect x="307" y="359" width="1" height="3" fill="#ffe000" opacity="0.93"/><rect x="329" y="319" width="3" height="3" fill="#ffff00" opacity="0.75"/><rect x="265" y="367" width="3" height="3" fill="#c0ff00" opacity="0.87"/><rect x="285" y="371" width="2" height="3" fill="#e8ff00" opacity="0.57"/><rect x="278" y="369" width="1" height="4" fill="#ffff00" opacity="0.66"/><rect x="328" y="312" width="3" height="4" fill="#ffd000" opacity="0.56"/><rect x="313" y="352" width="2" height="2" fill="#ffe000" opacity="0.63"/><rect x="332" y="302" width="1" height="4" fill="#ffd000" opacity="0.62"/><rect x="333" y="299" width="2" height="3" fill="#ffe000" opacity="0.92"/><rect x="247" y="349" width="2" height="2" fill="#c0ff00" opacity="0.52"/><rect x="248" y="347" width="3" height="3" fill="#e8ff00" opacity="0.92"/><rect x="322" y="329" width="1" height="4" fill="#c0ff00" opacity="0.63"/><rect x="309" y="355" width="3" height="4" fill="#ffff00" opacity="0.51"/><rect x="247" y="346" width="3" height="3" fill="#a0ff00" opacity="0.74"/><rect x="291" y="371" width="3" height="2" fill="#ffff00" opacity="0.50"/><rect x="304" y="361" width="3" height="4" fill="#e8ff00" opacity="0.51"/><rect x="323" y="331" width="3" height="4" fill="#a0ff00" opacity="0.72"/><rect x="330" y="310" width="3" height="2" fill="#c0ff00" opacity="0.71"/><rect x="321" y="332" width="2" height="4" fill="#c0ff00" opacity="0.79"/><rect x="292" y="368" width="3" height="4" fill="#ffe000" opacity="0.94"/><rect x="302" y="364" width="1" height="2" fill="#a0ff00" opacity="0.60"/><rect x="326" y="325" width="1" height="3" fill="#a0ff00" opacity="0.69"/><rect x="244" y="337" width="1" height="2" fill="#e8ff00" opacity="0.78"/><rect x="324" y="325" width="2" height="4" fill="#ffe000" opacity="0.57"/><rect x="309" y="353" width="3" height="2" fill="#ffff00" opacity="0.75"/><rect x="315" y="347" width="3" height="4" fill="#ffff00" opacity="0.83"/><rect x="327" y="315" width="2" height="4" fill="#ffd000" opacity="0.72"/><rect x="274" y="371" width="1" height="4" fill="#c0ff00" opacity="0.57"/><rect x="311" y="353" width="3" height="4" fill="#ffd000" opacity="0.60"/><rect x="243" y="337" width="2" height="4" fill="#e8ff00" opacity="0.86"/><rect x="328" y="317" width="1" height="4" fill="#ffff00" opacity="0.79"/><rect x="245" y="338" width="1" height="4" fill="#ffd000" opacity="0.70"/><rect x="279" y="373" width="1" height="4" fill="#ffff00" opacity="0.74"/><rect x="280" y="372" width="2" height="4" fill="#80ff00" opacity="0.60"/>
<rect x="268" y="368" width="2" height="2" fill="#ffd000" opacity="0.82"/><rect x="275" y="369" width="3" height="3" fill="#ffe000" opacity="0.65"/><rect x="294" y="368" width="3" height="3" fill="#ffd000" opacity="0.61"/><rect x="299" y="364" width="2" height="2" fill="#ffff00" opacity="0.61"/><rect x="268" y="370" width="3" height="3" fill="#ffff00" opacity="0.75"/><rect x="275" y="371" width="3" height="3" fill="#ffe000" opacity="0.63"/><rect x="267" y="367" width="3" height="3" fill="#e8ff00" opacity="0.79"/><rect x="267" y="368" width="2" height="2" fill="#ffe000" opacity="0.91"/><rect x="276" y="369" width="2" height="2" fill="#ffd000" opacity="0.76"/><rect x="293" y="368" width="3" height="3" fill="#ffe000" opacity="0.84"/><rect x="289" y="368" width="2" height="2" fill="#ffd000" opacity="0.63"/><rect x="279" y="369" width="3" height="2" fill="#ffe000" opacity="0.73"/><rect x="266" y="367" width="2" height="2" fill="#ffd000" opacity="0.67"/><rect x="264" y="367" width="3" height="2" fill="#ffe000" opacity="0.62"/><rect x="292" y="367" width="3" height="2" fill="#ffd000" opacity="0.62"/><rect x="296" y="368" width="2" height="2" fill="#ffd000" opacity="0.62"/><rect x="276" y="369" width="3" height="3" fill="#c0ff00" opacity="0.82"/><rect x="297" y="366" width="3" height="2" fill="#ffd000" opacity="0.68"/><rect x="298" y="365" width="2" height="2" fill="#ffd000" opacity="0.68"/><rect x="263" y="366" width="3" height="2" fill="#ffd000" opacity="0.60"/><rect x="292" y="370" width="2" height="2" fill="#e8ff00" opacity="0.71"/><rect x="266" y="368" width="3" height="2" fill="#e8ff00" opacity="0.79"/>
<rect x="281" y="357" width="2" height="3" fill="#ff9000" opacity="0.90"/><rect x="278" y="357" width="2" height="3" fill="#ff9000" opacity="0.88"/><rect x="279" y="357" width="2" height="3" fill="#ffd000" opacity="0.81"/><rect x="277" y="357" width="2" height="3" fill="#ffd000" opacity="0.89"/><rect x="277" y="357" width="2" height="3" fill="#ffb000" opacity="0.83"/>
<rect x="304" y="348" width="2" height="4" fill="#ff7000" opacity="0.92"/><rect x="299" y="353" width="3" height="3" fill="#ff7000" opacity="0.78"/><rect x="310" y="341" width="2" height="3" fill="#e8ff00" opacity="0.80"/><rect x="300" y="353" width="2" height="3" fill="#ffd000" opacity="0.88"/><rect x="306" y="345" width="3" height="3" fill="#ffff00" opacity="0.80"/><rect x="305" y="347" width="2" height="3" fill="#ffff00" opacity="0.93"/><rect x="311" y="342" width="2" height="2" fill="#e8ff00" opacity="0.94"/><rect x="304" y="348" width="2" height="4" fill="#e8ff00" opacity="0.84"/><rect x="310" y="341" width="3" height="2" fill="#c0ff00" opacity="0.87"/>
<rect x="325" y="362" width="2" height="4" fill="#ffd000" opacity="0.88"/><rect x="333" y="343" width="1" height="4" fill="#e8ff00" opacity="0.72"/><rect x="315" y="373" width="3" height="5" fill="#e8ff00" opacity="0.86"/><rect x="331" y="347" width="3" height="3" fill="#e8ff00" opacity="0.67"/><rect x="316" y="376" width="1" height="6" fill="#ffff00" opacity="0.64"/><rect x="316" y="374" width="2" height="6" fill="#ffe000" opacity="0.94"/><rect x="334" y="346" width="3" height="3" fill="#ffd000" opacity="0.57"/><rect x="327" y="358" width="3" height="4" fill="#c0ff00" opacity="0.63"/><rect x="318" y="375" width="3" height="6" fill="#c0ff00" opacity="0.94"/><rect x="318" y="374" width="1" height="3" fill="#ffd000" opacity="0.93"/><rect x="322" y="366" width="3" height="4" fill="#ffe000" opacity="0.73"/><rect x="332" y="344" width="3" height="6" fill="#ffe000" opacity="0.94"/><rect x="329" y="352" width="3" height="4" fill="#ffd000" opacity="0.78"/><rect x="322" y="363" width="3" height="5" fill="#e8ff00" opacity="0.90"/><rect x="320" y="367" width="3" height="3" fill="#e8ff00" opacity="0.53"/><rect x="323" y="361" width="3" height="6" fill="#ffe000" opacity="0.60"/><rect x="326" y="357" width="2" height="5" fill="#ffff00" opacity="0.77"/><rect x="333" y="337" width="1" height="5" fill="#ffd000" opacity="0.75"/><rect x="327" y="354" width="1" height="5" fill="#ffd000" opacity="0.53"/><rect x="333" y="340" width="1" height="5" fill="#e8ff00" opacity="0.88"/><rect x="331" y="351" width="3" height="6" fill="#ffff00" opacity="0.50"/><rect x="328" y="350" width="2" height="3" fill="#ffd000" opacity="0.84"/><rect x="332" y="350" width="3" height="3" fill="#c0ff00" opacity="0.55"/><rect x="316" y="373" width="2" height="3" fill="#e8ff00" opacity="0.68"/><rect x="327" y="354" width="3" height="5" fill="#e8ff00" opacity="0.81"/><rect x="328" y="360" width="1" height="6" fill="#ffd000" opacity="0.82"/><rect x="318" y="378" width="3" height="4" fill="#c0ff00" opacity="0.67"/><rect x="322" y="366" width="1" height="3" fill="#c0ff00" opacity="0.68"/><rect x="332" y="340" width="1" height="6" fill="#e8ff00" opacity="0.62"/><rect x="329" y="351" width="3" height="6" fill="#ffe000" opacity="0.94"/><rect x="327" y="358" width="1" height="6" fill="#c0ff00" opacity="0.56"/><rect x="319" y="371" width="1" height="3" fill="#c0ff00" opacity="0.75"/><rect x="336" y="338" width="1" height="4" fill="#ffe000" opacity="0.51"/><rect x="329" y="357" width="3" height="6" fill="#ffd000" opacity="0.51"/>
<rect x="252" y="335" width="2" height="3" fill="#ffff00" opacity="0.88"/><rect x="253" y="343" width="2" height="4" fill="#ffff00" opacity="1.00"/><rect x="253" y="342" width="2" height="4" fill="#ffff00" opacity="1.00"/><rect x="251" y="335" width="2" height="4" fill="#c0ff00" opacity="0.80"/><rect x="253" y="342" width="2" height="3" fill="#ffe000" opacity="0.81"/><rect x="251" y="339" width="2" height="4" fill="#ffd000" opacity="0.89"/>
<rect x="229" y="229" width="1" height="2" fill="#80ff00" opacity="0.82"/><rect x="222" y="218" width="2" height="2" fill="#80ff00" opacity="0.62"/><rect x="239" y="243" width="2" height="2" fill="#80ff00" opacity="0.76"/><rect x="228" y="227" width="2" height="2" fill="#60ff00" opacity="0.56"/><rect x="221" y="215" width="1" height="3" fill="#60ff00" opacity="0.78"/><rect x="223" y="215" width="1" height="3" fill="#80ff00" opacity="0.82"/><rect x="227" y="224" width="1" height="4" fill="#a0ff00" opacity="0.68"/><rect x="223" y="219" width="2" height="4" fill="#60ff00" opacity="0.87"/><rect x="240" y="244" width="1" height="4" fill="#60ff00" opacity="0.53"/><rect x="231" y="229" width="2" height="2" fill="#60ff00" opacity="0.62"/><rect x="233" y="231" width="2" height="2" fill="#a0ff00" opacity="0.50"/><rect x="233" y="231" width="1" height="2" fill="#a0ff00" opacity="0.85"/><rect x="228" y="228" width="2" height="2" fill="#60ff00" opacity="0.55"/><rect x="225" y="222" width="1" height="4" fill="#80ff00" opacity="0.78"/><rect x="234" y="234" width="1" height="4" fill="#80ff00" opacity="0.73"/><rect x="237" y="242" width="2" height="2" fill="#60ff00" opacity="0.83"/>
<rect x="314" y="203" width="1" height="110" fill="#90ff00" opacity="0.7"/>
<rect x="314" y="313" width="1" height="63" fill="#ffe000"/>
<rect x="313" y="338" width="3" height="38" fill="#ffc000" opacity="0.75"/>
<rect x="257" y="330" width="2" height="46" fill="#ffb800"/>
<rect x="256" y="340" width="4" height="36" fill="#ffe000" opacity="0.55"/>
<rect x="247" y="355" width="3" height="21" fill="#e0ff00" opacity="0.7"/>
<rect x="220" y="338" width="2" height="30" fill="#c0ff00" opacity="0.8"/>
<rect x="366" y="330" width="17" height="4" fill="#ffe400" opacity="0.9"/><rect x="366" y="337" width="15" height="4" fill="#f0f000" opacity="0.85"/>
<rect x="351" y="333" width="5" height="4" fill="#d0ff00"/><rect x="350" y="345" width="3" height="6" fill="#c0ff00"/><rect x="364" y="340" width="3" height="8" fill="#a0ff00"/>
<rect x="396" y="203" width="54" height="173" fill="url(#hot)"/>
<rect x="396" y="203" width="1" height="173" fill="#ff8000" opacity="0.90"/>
<rect x="397" y="203" width="2" height="173" fill="#ffb000" opacity="0.70"/>
<rect x="400" y="203" width="1" height="173" fill="#80ff00" opacity="0.70"/>
<rect x="402" y="203" width="2" height="173" fill="#ffe000" opacity="0.60"/>
<rect x="405" y="203" width="1" height="173" fill="#ffb800" opacity="0.60"/>
<rect x="407" y="203" width="1" height="173" fill="#60ff00" opacity="0.60"/>
<rect x="409" y="203" width="2" height="173" fill="#ffd000" opacity="0.60"/>
<rect x="412" y="203" width="1" height="173" fill="#a0ff00" opacity="0.70"/>
<rect x="414" y="203" width="1" height="173" fill="#ffc000" opacity="0.50"/>
<rect x="416" y="203" width="1" height="173" fill="#50ff00" opacity="0.70"/>
<rect x="417" y="203" width="1" height="173" fill="#a0ff00" opacity="0.60"/>
<rect x="420" y="203" width="1" height="173" fill="#ffd000" opacity="0.50"/>
<rect x="423" y="203" width="1" height="173" fill="#d8ff00" opacity="0.70"/>
<rect x="427" y="203" width="1" height="173" fill="#ffe000" opacity="0.50"/>
<rect x="431" y="203" width="1" height="173" fill="#ffc800" opacity="0.50"/>
<rect x="436" y="203" width="1" height="173" fill="#ffe000" opacity="0.50"/>
<rect x="440" y="203" width="1" height="173" fill="#a0ff00" opacity="0.70"/>
<rect x="443" y="203" width="1" height="173" fill="#ffd000" opacity="0.50"/>
<rect x="445" y="203" width="1" height="173" fill="#40ff00" opacity="0.80"/>
<rect x="446" y="203" width="1" height="173" fill="#a0ff00" opacity="0.60"/>
<rect x="427" y="369" width="1" height="3" fill="#ffe000" opacity="0.54"/><rect x="422" y="338" width="2" height="12" fill="#ffe000" opacity="0.45"/><rect x="440" y="231" width="1" height="14" fill="#d8ff00" opacity="0.62"/><rect x="398" y="220" width="2" height="7" fill="#d8ff00" opacity="0.59"/><rect x="430" y="220" width="2" height="4" fill="#e8ff00" opacity="0.69"/><rect x="412" y="319" width="2" height="7" fill="#ffb000" opacity="0.75"/><rect x="416" y="335" width="2" height="10" fill="#ff7000" opacity="0.42"/><rect x="409" y="270" width="2" height="12" fill="#fff000" opacity="0.56"/><rect x="405" y="293" width="1" height="13" fill="#e8ff00" opacity="0.55"/><rect x="429" y="369" width="2" height="5" fill="#ff9000" opacity="0.41"/><rect x="427" y="246" width="2" height="12" fill="#ffe800" opacity="0.76"/><rect x="405" y="314" width="2" height="12" fill="#ff7000" opacity="0.58"/><rect x="409" y="345" width="1" height="13" fill="#ff9000" opacity="0.54"/><rect x="446" y="267" width="2" height="7" fill="#ffe000" opacity="0.40"/><rect x="412" y="311" width="2" height="11" fill="#ffc800" opacity="0.57"/><rect x="441" y="367" width="1" height="4" fill="#ffb000" opacity="0.50"/><rect x="402" y="364" width="2" height="12" fill="#ff9000" opacity="0.37"/><rect x="430" y="301" width="1" height="13" fill="#ffc800" opacity="0.68"/><rect x="412" y="228" width="2" height="8" fill="#ffff00" opacity="0.49"/><rect x="414" y="289" width="2" height="9" fill="#ffff00" opacity="0.38"/><rect x="400" y="249" width="1" height="4" fill="#ffff40" opacity="0.68"/><rect x="428" y="307" width="1" height="10" fill="#ff7000" opacity="0.38"/><rect x="422" y="209" width="2" height="13" fill="#ffff00" opacity="0.66"/><rect x="416" y="295" width="1" height="10" fill="#e8ff00" opacity="0.40"/><rect x="445" y="265" width="1" height="12" fill="#ffe000" opacity="0.39"/><rect x="437" y="372" width="2" height="9" fill="#ffb000" opacity="0.47"/><rect x="431" y="319" width="2" height="3" fill="#ff9000" opacity="0.75"/><rect x="404" y="300" width="1" height="6" fill="#ffc800" opacity="0.75"/><rect x="441" y="338" width="1" height="5" fill="#ffc800" opacity="0.37"/><rect x="437" y="322" width="2" height="10" fill="#ffe000" opacity="0.76"/><rect x="432" y="365" width="2" height="7" fill="#ff9000" opacity="0.68"/><rect x="412" y="319" width="2" height="9" fill="#ffe000" opacity="0.39"/><rect x="434" y="254" width="2" height="14" fill="#d8ff00" opacity="0.70"/><rect x="424" y="262" width="1" height="6" fill="#fff000" opacity="0.64"/><rect x="442" y="317" width="2" height="12" fill="#ff7000" opacity="0.74"/><rect x="406" y="326" width="1" height="7" fill="#ffe000" opacity="0.75"/><rect x="436" y="294" width="1" height="11" fill="#d8ff00" opacity="0.60"/><rect x="409" y="209" width="2" height="12" fill="#ffe000" opacity="0.57"/><rect x="427" y="336" width="2" height="12" fill="#ffc800" opacity="0.38"/><rect x="414" y="237" width="2" height="7" fill="#e8ff00" opacity="0.52"/><rect x="445" y="235" width="2" height="13" fill="#fff000" opacity="0.69"/><rect x="442" y="211" width="1" height="10" fill="#fff000" opacity="0.49"/><rect x="422" y="372" width="2" height="9" fill="#ffe000" opacity="0.65"/><rect x="417" y="337" width="2" height="14" fill="#ffe000" opacity="0.71"/><rect x="396" y="243" width="2" height="13" fill="#ffff00" opacity="0.59"/><rect x="426" y="322" width="2" height="3" fill="#ff9000" opacity="0.59"/><rect x="426" y="233" width="1" height="5" fill="#fff000" opacity="0.73"/><rect x="411" y="305" width="1" height="9" fill="#ff7000" opacity="0.64"/><rect x="410" y="368" width="2" height="3" fill="#ff9000" opacity="0.65"/><rect x="433" y="220" width="2" height="9" fill="#ffe000" opacity="0.49"/><rect x="443" y="227" width="2" height="11" fill="#ffe000" opacity="0.60"/><rect x="447" y="316" width="1" height="7" fill="#ffe000" opacity="0.73"/><rect x="405" y="311" width="1" height="10" fill="#ffb000" opacity="0.44"/><rect x="408" y="230" width="1" height="10" fill="#e8ff00" opacity="0.75"/><rect x="426" y="325" width="2" height="11" fill="#ffb000" opacity="0.36"/><rect x="446" y="359" width="2" height="12" fill="#ffe000" opacity="0.62"/><rect x="435" y="255" width="1" height="13" fill="#e8ff00" opacity="0.80"/><rect x="408" y="219" width="2" height="6" fill="#ffff00" opacity="0.59"/><rect x="401" y="247" width="1" height="9" fill="#ffff00" opacity="0.37"/><rect x="399" y="279" width="1" height="14" fill="#ffff40" opacity="0.52"/><rect x="406" y="232" width="2" height="14" fill="#fff000" opacity="0.45"/><rect x="421" y="318" width="1" height="9" fill="#ffb000" opacity="0.47"/><rect x="429" y="254" width="2" height="4" fill="#ffff40" opacity="0.45"/><rect x="423" y="309" width="2" height="14" fill="#ff9000" opacity="0.44"/><rect x="433" y="267" width="1" height="6" fill="#ffff40" opacity="0.59"/><rect x="406" y="296" width="1" height="14" fill="#ffe000" opacity="0.54"/><rect x="448" y="239" width="2" height="5" fill="#ffff00" opacity="0.59"/><rect x="441" y="311" width="1" height="14" fill="#ffb000" opacity="0.67"/><rect x="425" y="286" width="1" height="10" fill="#fff000" opacity="0.52"/><rect x="399" y="357" width="2" height="10" fill="#ffc800" opacity="0.71"/><rect x="424" y="287" width="2" height="5" fill="#e8ff00" opacity="0.54"/><rect x="424" y="207" width="1" height="10" fill="#ffe800" opacity="0.40"/><rect x="428" y="221" width="2" height="6" fill="#ffff00" opacity="0.65"/><rect x="434" y="283" width="1" height="4" fill="#d8ff00" opacity="0.50"/><rect x="407" y="285" width="2" height="3" fill="#ffe800" opacity="0.63"/><rect x="445" y="234" width="1" height="13" fill="#ffff40" opacity="0.76"/><rect x="436" y="224" width="1" height="10" fill="#ffe000" opacity="0.75"/><rect x="409" y="316" width="2" height="5" fill="#ff7000" opacity="0.48"/><rect x="424" y="349" width="1" height="13" fill="#ffe000" opacity="0.46"/><rect x="414" y="226" width="2" height="4" fill="#e8ff00" opacity="0.48"/><rect x="402" y="243" width="2" height="13" fill="#e8ff00" opacity="0.39"/><rect x="417" y="256" width="2" height="13" fill="#ffff00" opacity="0.56"/><rect x="402" y="330" width="2" height="3" fill="#ff7000" opacity="0.67"/><rect x="399" y="355" width="1" height="7" fill="#ffc800" opacity="0.47"/><rect x="448" y="331" width="2" height="11" fill="#ffe000" opacity="0.39"/><rect x="428" y="348" width="2" height="9" fill="#ff9000" opacity="0.63"/><rect x="421" y="312" width="1" height="5" fill="#ffb000" opacity="0.55"/><rect x="398" y="281" width="2" height="9" fill="#ffe000" opacity="0.77"/><rect x="402" y="247" width="1" height="10" fill="#fff000" opacity="0.68"/><rect x="398" y="348" width="1" height="12" fill="#ffb000" opacity="0.38"/><rect x="401" y="278" width="2" height="7" fill="#e8ff00" opacity="0.65"/><rect x="398" y="313" width="2" height="7" fill="#ff9000" opacity="0.66"/><rect x="429" y="333" width="2" height="10" fill="#ffe000" opacity="0.56"/><rect x="398" y="248" width="2" height="10" fill="#ffe800" opacity="0.73"/><rect x="401" y="231" width="2" height="7" fill="#ffe800" opacity="0.76"/><rect x="417" y="363" width="1" height="9" fill="#ff7000" opacity="0.74"/><rect x="412" y="236" width="1" height="14" fill="#ffff40" opacity="0.68"/><rect x="425" y="294" width="2" height="5" fill="#fff000" opacity="0.79"/><rect x="396" y="305" width="2" height="7" fill="#ff9000" opacity="0.63"/><rect x="423" y="360" width="2" height="4" fill="#ffc800" opacity="0.52"/><rect x="408" y="252" width="2" height="6" fill="#d8ff00" opacity="0.57"/><rect x="433" y="331" width="1" height="4" fill="#ffe000" opacity="0.49"/><rect x="417" y="289" width="2" height="5" fill="#ffff40" opacity="0.77"/><rect x="398" y="253" width="2" height="3" fill="#ffe800" opacity="0.56"/><rect x="409" y="214" width="1" height="8" fill="#ffff40" opacity="0.49"/><rect x="419" y="319" width="1" height="3" fill="#ffb000" opacity="0.69"/><rect x="402" y="282" width="1" height="6" fill="#ffff00" opacity="0.64"/><rect x="445" y="352" width="2" height="8" fill="#ffc800" opacity="0.53"/><rect x="445" y="272" width="2" height="4" fill="#e8ff00" opacity="0.43"/><rect x="442" y="328" width="1" height="7" fill="#ff7000" opacity="0.73"/><rect x="399" y="345" width="1" height="9" fill="#ffe000" opacity="0.39"/><rect x="427" y="212" width="2" height="3" fill="#e8ff00" opacity="0.42"/><rect x="443" y="223" width="1" height="8" fill="#ffe800" opacity="0.46"/><rect x="435" y="327" width="1" height="14" fill="#ffb000" opacity="0.62"/><rect x="416" y="336" width="2" height="8" fill="#ffc800" opacity="0.47"/><rect x="409" y="352" width="2" height="10" fill="#ff9000" opacity="0.66"/><rect x="433" y="352" width="1" height="6" fill="#ffb000" opacity="0.60"/><rect x="401" y="261" width="1" height="6" fill="#e8ff00" opacity="0.65"/><rect x="433" y="258" width="2" height="14" fill="#fff000" opacity="0.44"/><rect x="406" y="233" width="2" height="6" fill="#ffff40" opacity="0.55"/><rect x="415" y="268" width="1" height="12" fill="#fff000" opacity="0.62"/><rect x="447" y="342" width="1" height="13" fill="#ffc800" opacity="0.61"/><rect x="429" y="206" width="2" height="3" fill="#ffe000" opacity="0.42"/><rect x="406" y="370" width="2" height="9" fill="#ffc800" opacity="0.73"/><rect x="434" y="358" width="2" height="5" fill="#ff9000" opacity="0.55"/><rect x="431" y="364" width="1" height="14" fill="#ffb000" opacity="0.62"/><rect x="397" y="330" width="1" height="7" fill="#ffe000" opacity="0.36"/><rect x="413" y="244" width="2" height="9" fill="#ffff40" opacity="0.76"/><rect x="401" y="366" width="2" height="7" fill="#ffb000" opacity="0.63"/><rect x="397" y="357" width="1" height="7" fill="#ff7000" opacity="0.55"/><rect x="412" y="220" width="2" height="9" fill="#e8ff00" opacity="0.79"/><rect x="421" y="325" width="1" height="9" fill="#ffe000" opacity="0.62"/><rect x="408" y="332" width="2" height="8" fill="#ffe000" opacity="0.66"/><rect x="419" y="313" width="1" height="9" fill="#ff9000" opacity="0.60"/><rect x="446" y="361" width="1" height="7" fill="#ff9000" opacity="0.54"/><rect x="426" y="337" width="1" height="10" fill="#ff7000" opacity="0.77"/><rect x="424" y="364" width="1" height="6" fill="#ffc800" opacity="0.67"/><rect x="410" y="240" width="1" height="4" fill="#ffff40" opacity="0.55"/><rect x="425" y="341" width="1" height="13" fill="#ff9000" opacity="0.36"/><rect x="440" y="360" width="1" height="4" fill="#ffb000" opacity="0.72"/><rect x="400" y="312" width="2" height="5" fill="#ffb000" opacity="0.69"/><rect x="417" y="314" width="2" height="14" fill="#ff9000" opacity="0.79"/><rect x="427" y="334" width="2" height="13" fill="#ffe000" opacity="0.50"/><rect x="445" y="353" width="2" height="3" fill="#ff7000" opacity="0.80"/><rect x="409" y="251" width="2" height="7" fill="#ffe800" opacity="0.45"/><rect x="438" y="264" width="2" height="13" fill="#ffff00" opacity="0.61"/><rect x="426" y="262" width="2" height="9" fill="#ffe800" opacity="0.45"/><rect x="423" y="203" width="2" height="4" fill="#ffff40" opacity="0.42"/><rect x="416" y="276" width="1" height="8" fill="#ffff40" opacity="0.46"/><rect x="414" y="229" width="2" height="7" fill="#ffff00" opacity="0.59"/><rect x="436" y="271" width="1" height="5" fill="#d8ff00" opacity="0.70"/><rect x="402" y="228" width="2" height="7" fill="#ffff40" opacity="0.42"/><rect x="410" y="284" width="2" height="5" fill="#ffff00" opacity="0.54"/><rect x="437" y="311" width="2" height="3" fill="#ffb000" opacity="0.47"/><rect x="429" y="303" width="1" height="4" fill="#ffb000" opacity="0.49"/><rect x="431" y="322" width="1" height="14" fill="#ff9000" opacity="0.51"/><rect x="431" y="280" width="2" height="4" fill="#e8ff00" opacity="0.54"/><rect x="429" y="204" width="2" height="10" fill="#ffe800" opacity="0.68"/><rect x="426" y="228" width="2" height="11" fill="#ffff40" opacity="0.38"/><rect x="423" y="231" width="1" height="12" fill="#fff000" opacity="0.64"/><rect x="428" y="362" width="2" height="11" fill="#ff9000" opacity="0.65"/><rect x="439" y="324" width="2" height="6" fill="#ff9000" opacity="0.67"/><rect x="397" y="233" width="2" height="9" fill="#ffff00" opacity="0.78"/><rect x="425" y="289" width="1" height="8" fill="#e8ff00" opacity="0.47"/><rect x="410" y="327" width="2" height="7" fill="#ffb000" opacity="0.47"/><rect x="435" y="351" width="2" height="14" fill="#ff7000" opacity="0.37"/><rect x="425" y="216" width="1" height="3" fill="#fff000" opacity="0.54"/><rect x="433" y="241" width="1" height="8" fill="#fff000" opacity="0.66"/><rect x="445" y="336" width="2" height="5" fill="#ff9000" opacity="0.55"/><rect x="437" y="328" width="1" height="10" fill="#ff9000" opacity="0.74"/><rect x="426" y="232" width="2" height="7" fill="#ffff00" opacity="0.79"/><rect x="416" y="295" width="1" height="4" fill="#ffe000" opacity="0.48"/><rect x="437" y="298" width="2" height="13" fill="#ffe000" opacity="0.37"/><rect x="418" y="298" width="2" height="5" fill="#ffff40" opacity="0.45"/><rect x="429" y="308" width="2" height="12" fill="#ffc800" opacity="0.54"/><rect x="410" y="355" width="1" height="14" fill="#ffb000" opacity="0.50"/><rect x="398" y="227" width="1" height="14" fill="#e8ff00" opacity="0.69"/><rect x="435" y="324" width="1" height="9" fill="#ff9000" opacity="0.52"/><rect x="421" y="231" width="1" height="9" fill="#ffe800" opacity="0.78"/><rect x="418" y="243" width="2" height="8" fill="#ffe800" opacity="0.73"/><rect x="415" y="329" width="2" height="5" fill="#ff9000" opacity="0.75"/><rect x="398" y="320" width="2" height="6" fill="#ffb000" opacity="0.64"/><rect x="418" y="279" width="1" height="7" fill="#fff000" opacity="0.62"/><rect x="428" y="327" width="1" height="10" fill="#ff9000" opacity="0.78"/><rect x="424" y="272" width="1" height="14" fill="#ffe000" opacity="0.44"/><rect x="422" y="243" width="1" height="14" fill="#d8ff00" opacity="0.61"/><rect x="440" y="268" width="1" height="3" fill="#ffff40" opacity="0.65"/><rect x="418" y="314" width="1" height="14" fill="#ffe000" opacity="0.45"/><rect x="444" y="250" width="2" height="7" fill="#d8ff00" opacity="0.75"/><rect x="435" y="304" width="1" height="5" fill="#ffe000" opacity="0.72"/><rect x="414" y="361" width="2" height="14" fill="#ff7000" opacity="0.49"/><rect x="412" y="283" width="2" height="3" fill="#ffe800" opacity="0.65"/><rect x="426" y="358" width="1" height="7" fill="#ffb000" opacity="0.71"/><rect x="401" y="352" width="1" height="12" fill="#ff7000" opacity="0.79"/><rect x="435" y="230" width="2" height="5" fill="#e8ff00" opacity="0.75"/><rect x="398" y="323" width="2" height="8" fill="#ffe000" opacity="0.47"/><rect x="429" y="364" width="1" height="12" fill="#ffe000" opacity="0.67"/><rect x="427" y="236" width="1" height="8" fill="#ffe800" opacity="0.41"/><rect x="448" y="355" width="1" height="3" fill="#ff7000" opacity="0.40"/><rect x="424" y="222" width="1" height="13" fill="#e8ff00" opacity="0.66"/><rect x="413" y="203" width="1" height="12" fill="#ffe000" opacity="0.71"/><rect x="433" y="357" width="1" height="12" fill="#ff7000" opacity="0.58"/><rect x="427" y="280" width="1" height="6" fill="#fff000" opacity="0.60"/><rect x="434" y="297" width="2" height="3" fill="#d8ff00" opacity="0.41"/><rect x="422" y="364" width="2" height="5" fill="#ffb000" opacity="0.52"/><rect x="398" y="309" width="1" height="8" fill="#ffe000" opacity="0.66"/><rect x="437" y="325" width="2" height="9" fill="#ff9000" opacity="0.50"/><rect x="418" y="324" width="2" height="4" fill="#ffb000" opacity="0.77"/><rect x="443" y="208" width="1" height="13" fill="#ffff40" opacity="0.67"/><rect x="424" y="238" width="2" height="8" fill="#d8ff00" opacity="0.75"/><rect x="422" y="223" width="2" height="7" fill="#e8ff00" opacity="0.38"/><rect x="400" y="221" width="1" height="13" fill="#ffff40" opacity="0.58"/><rect x="400" y="251" width="2" height="9" fill="#ffff40" opacity="0.73"/><rect x="420" y="265" width="2" height="6" fill="#fff000" opacity="0.39"/><rect x="438" y="282" width="2" height="3" fill="#d8ff00" opacity="0.54"/><rect x="447" y="354" width="2" height="6" fill="#ffe000" opacity="0.49"/><rect x="404" y="354" width="1" height="3" fill="#ff9000" opacity="0.55"/><rect x="408" y="215" width="1" height="13" fill="#ffe800" opacity="0.70"/><rect x="427" y="329" width="2" height="4" fill="#ff7000" opacity="0.60"/><rect x="439" y="284" width="1" height="12" fill="#ffff40" opacity="0.59"/><rect x="446" y="350" width="1" height="13" fill="#ffb000" opacity="0.60"/><rect x="448" y="227" width="1" height="10" fill="#ffff40" opacity="0.75"/><rect x="396" y="340" width="1" height="12" fill="#ff7000" opacity="0.74"/><rect x="440" y="263" width="2" height="8" fill="#ffff00" opacity="0.37"/><rect x="403" y="253" width="2" height="8" fill="#ffe800" opacity="0.45"/><rect x="432" y="321" width="1" height="6" fill="#ff9000" opacity="0.79"/><rect x="407" y="253" width="1" height="14" fill="#ffe000" opacity="0.52"/><rect x="426" y="207" width="2" height="12" fill="#e8ff00" opacity="0.44"/><rect x="410" y="207" width="2" height="5" fill="#fff000" opacity="0.52"/><rect x="412" y="247" width="2" height="11" fill="#ffff00" opacity="0.66"/><rect x="412" y="254" width="2" height="13" fill="#ffff40" opacity="0.59"/><rect x="438" y="298" width="1" height="9" fill="#d8ff00" opacity="0.43"/><rect x="411" y="288" width="1" height="5" fill="#d8ff00" opacity="0.78"/><rect x="431" y="277" width="2" height="5" fill="#ffff00" opacity="0.76"/><rect x="400" y="234" width="1" height="7" fill="#d8ff00" opacity="0.70"/><rect x="413" y="217" width="2" height="6" fill="#d8ff00" opacity="0.77"/><rect x="426" y="262" width="2" height="5" fill="#ffe000" opacity="0.42"/><rect x="444" y="372" width="2" height="13" fill="#ff9000" opacity="0.67"/><rect x="423" y="210" width="1" height="7" fill="#ffe800" opacity="0.54"/><rect x="419" y="231" width="1" height="14" fill="#e8ff00" opacity="0.68"/><rect x="432" y="285" width="1" height="8" fill="#ffff40" opacity="0.70"/><rect x="441" y="329" width="2" height="11" fill="#ffb000" opacity="0.62"/><rect x="415" y="352" width="2" height="6" fill="#ff7000" opacity="0.80"/><rect x="398" y="221" width="2" height="8" fill="#e8ff00" opacity="0.72"/><rect x="431" y="268" width="1" height="4" fill="#ffe800" opacity="0.70"/><rect x="412" y="239" width="1" height="6" fill="#ffff00" opacity="0.43"/><rect x="435" y="221" width="1" height="11" fill="#d8ff00" opacity="0.62"/><rect x="412" y="351" width="2" height="13" fill="#ff7000" opacity="0.40"/><rect x="414" y="303" width="2" height="9" fill="#ff9000" opacity="0.71"/><rect x="436" y="224" width="1" height="6" fill="#ffe000" opacity="0.52"/><rect x="410" y="331" width="1" height="7" fill="#ff7000" opacity="0.42"/><rect x="418" y="310" width="2" height="12" fill="#ff9000" opacity="0.48"/><rect x="418" y="223" width="2" height="5" fill="#d8ff00" opacity="0.53"/><rect x="400" y="371" width="2" height="4" fill="#ffe000" opacity="0.75"/><rect x="414" y="248" width="1" height="11" fill="#d8ff00" opacity="0.57"/><rect x="408" y="207" width="2" height="10" fill="#ffff40" opacity="0.38"/><rect x="417" y="287" width="1" height="6" fill="#d8ff00" opacity="0.55"/><rect x="396" y="279" width="1" height="10" fill="#ffff00" opacity="0.53"/><rect x="436" y="292" width="2" height="11" fill="#fff000" opacity="0.60"/><rect x="438" y="269" width="1" height="13" fill="#fff000" opacity="0.43"/>
<rect x="418" y="203" width="14" height="110" fill="#ffff00" opacity="0.45"/>
<rect x="438" y="203" width="4" height="173" fill="#40ff10" opacity="0.55"/>
<rect x="396" y="270" width="54" height="106" fill="url(#ow)"/>
<g fill="none">
<path d="M396 276 Q404 310 424 315 T450 318" stroke="#ffa000" stroke-width="2" opacity="0.55" stroke-dasharray="4 1 3 1.5"/>
<path d="M396 283 Q404 317 424 322 T450 325" stroke="#ff8000" stroke-width="2" opacity="0.6" stroke-dasharray="5 1 5 1.5"/>
<path d="M396 289 Q404 323 424 328 T450 331" stroke="#ff6a00" stroke-width="2" opacity="0.7" stroke-dasharray="6 1 5 1.5"/>
<path d="M396 296 Q404 330 424 335 T450 338" stroke="#ff3a00" stroke-width="3.2" opacity="0.95" stroke-dasharray="4 1 3 1.5"/>
<path d="M396 301 Q404 335 424 340 T450 343" stroke="#ffb000" stroke-width="2" opacity="0.5" stroke-dasharray="6 1 2 1.5"/>
<path d="M396 306 Q404 340 424 345 T450 348" stroke="#ff4a00" stroke-width="3" opacity="0.9" stroke-dasharray="4 1 3 1.5"/>
<path d="M396 311 Q404 345 424 350 T450 353" stroke="#ffa000" stroke-width="2" opacity="0.5" stroke-dasharray="5 1 3 1.5"/>
<path d="M396 316 Q404 350 424 355 T450 358" stroke="#ff5a00" stroke-width="2.6" opacity="0.85" stroke-dasharray="3 1 4 1.5"/>
<path d="M396 324 Q404 358 424 363 T450 366" stroke="#ff7a00" stroke-width="2.4" opacity="0.8" stroke-dasharray="4 1 5 1.5"/>
<path d="M396 332 Q404 366 424 371 T450 374" stroke="#ff9000" stroke-width="2.2" opacity="0.7" stroke-dasharray="3 1 3 1.5"/>
</g>
<rect x="467" y="203" width="16" height="90" fill="#00ff7c"/><rect x="467" y="293" width="16" height="14" fill="#08ff64"/>
<rect x="467" y="210" width="16" height="3" fill="#70ff00" opacity="0.85"/><rect x="467" y="240" width="16" height="2" fill="#28ff30" opacity="0.8"/>
<rect x="450" y="203" width="17" height="173" fill="#38ff10"/>
<rect x="450" y="203" width="2" height="173" fill="#fff000" opacity="0.90"/>
<rect x="453" y="203" width="1" height="173" fill="#a0ff00" opacity="0.80"/>
<rect x="457" y="203" width="3" height="173" fill="#fff200" opacity="0.90"/>
<rect x="461" y="203" width="1" height="173" fill="#90ff00" opacity="0.70"/>
<rect x="464" y="203" width="2" height="173" fill="#e8ff00" opacity="0.85"/>
<rect x="453" y="236" width="3" height="3" fill="#ffd000"/><rect x="453" y="246" width="3" height="3" fill="#ff9000"/><rect x="452" y="251" width="3" height="3" fill="#ffd000"/><rect x="453" y="261" width="3" height="3" fill="#ffd000"/><rect x="453" y="266" width="3" height="3" fill="#ffe800"/><rect x="454" y="271" width="3" height="3" fill="#ffd000"/><rect x="453" y="276" width="3" height="3" fill="#ffb000"/><rect x="452" y="286" width="3" height="3" fill="#ffb000"/><rect x="453" y="291" width="3" height="3" fill="#ffe800"/><rect x="454" y="296" width="3" height="3" fill="#ffe800"/><rect x="453" y="301" width="3" height="3" fill="#ffb000"/><rect x="453" y="306" width="3" height="3" fill="#ff9000"/><rect x="453" y="311" width="3" height="3" fill="#ffb000"/><rect x="454" y="326" width="3" height="3" fill="#ff9000"/><rect x="462" y="236" width="3" height="3" fill="#ffb000"/><rect x="462" y="241" width="3" height="3" fill="#ffe800"/><rect x="460" y="246" width="3" height="3" fill="#ffe800"/><rect x="461" y="251" width="3" height="3" fill="#ffe800"/><rect x="461" y="256" width="3" height="3" fill="#ff9000"/><rect x="460" y="261" width="3" height="3" fill="#ffd000"/><rect x="462" y="266" width="3" height="3" fill="#ffb000"/><rect x="462" y="276" width="3" height="3" fill="#ffe800"/><rect x="461" y="281" width="3" height="3" fill="#ffd000"/><rect x="462" y="286" width="3" height="3" fill="#ff9000"/><rect x="462" y="291" width="3" height="3" fill="#ff9000"/><rect x="460" y="296" width="3" height="3" fill="#ffe800"/><rect x="462" y="301" width="3" height="3" fill="#ffe800"/><rect x="461" y="306" width="3" height="3" fill="#ffd000"/><rect x="461" y="311" width="3" height="3" fill="#ffd000"/><rect x="461" y="316" width="3" height="3" fill="#ffe800"/><rect x="461" y="326" width="3" height="3" fill="#ffd000"/><rect x="466" y="300" width="5" height="3" fill="#ffc000"/><rect x="465" y="307" width="5" height="3" fill="#ffc000"/><rect x="463" y="314" width="5" height="3" fill="#ffc000"/><rect x="461" y="321" width="5" height="3" fill="#ffc000"/><rect x="459" y="328" width="5" height="3" fill="#ffc000"/><rect x="458" y="335" width="5" height="3" fill="#ffc000"/><rect x="456" y="342" width="5" height="3" fill="#ffc000"/>
<g fill="none">
<path d="M444 350 Q456 346 466 338" stroke="#ff2800" stroke-width="4.5" opacity="0.95"/><path d="M450 338 Q462 338 472 330 T485 312" stroke="#ff4000" stroke-width="3" opacity="0.85"/>
<path d="M450 348 Q464 348 475 338 T486 322" stroke="#ff5a00" stroke-width="3" opacity="0.85"/>
<path d="M450 358 Q466 358 478 346 T486 334" stroke="#ff8000" stroke-width="2.6" opacity="0.8" stroke-dasharray="6 2"/>
<path d="M450 366 Q468 366 482 352" stroke="#ffc000" stroke-width="2.4" opacity="0.75" stroke-dasharray="5 2"/>
<path d="M450 374 Q470 374 484 362" stroke="#ffd800" stroke-width="2.2" opacity="0.7" stroke-dasharray="4 2"/>
</g>
<rect x="483" y="203" width="3" height="173" fill="#f4ff00"/>
<rect x="486" y="203" width="1" height="173" fill="#80ff00" opacity="0.8"/>
<rect x="484" y="312" width="3" height="24" fill="#ff4000"/>
<rect x="488" y="248" width="2" height="6" fill="#ffe000"/>
<rect x="511" y="331" width="6" height="5" fill="#ffc400"/>
<rect x="532" y="341" width="20" height="5" fill="#e8ff00" opacity="0.85"/><rect x="533" y="331" width="6" height="5" fill="#b0ff00" opacity="0.8"/>
<rect x="677" y="336" width="3" height="10" fill="#a0ff00" opacity="0.8"/><rect x="677" y="352" width="4" height="8" fill="#e0ff00" opacity="0.85"/><rect x="678" y="364" width="2" height="8" fill="#a0ff00" opacity="0.7"/>
</g>
<rect x="704" y="198" width="16" height="180" fill="url(#cb)"/>
<g stroke="#fff" stroke-width="0.4"><path stroke-width="1" d="M219 197.5H689M219 377.5H689M219.5 197V378M688.5 197V378M208 273.5H219M208 374.5H219M214 202.5H219M214 212.5H219M214 224.5H219M214 242.5H219M214 277.5H219M214 283.5H219M214 288.5H219M214 295.5H219M214 303.5H219M214 313.5H219M214 326.5H219M214 343.5H219M220.5 378V383M238.5 378V389M256.5 378V383M274.5 378V383M292.5 378V383M310.5 378V383M328.5 378V383M346.5 378V383M364.5 378V383M382.5 378V383M400.5 378V383M418.5 378V383M436.5 378V383M454.5 378V389M472.5 378V383M490.5 378V383M508.5 378V383M526.5 378V383M544.5 378V383M562.5 378V383M580.5 378V383M598.5 378V383M616.5 378V383M634.5 378V383M652.5 378V383M670.5 378V389M687.5 378V383M720.5 198V378M704 377.5H732M721 217.5H732M721 244.5H732M721 270.5H732M721 297.5H732M721 323.5H732M721 350.5H732M721 204.5H726M721 230.5H726M721 257.5H726M721 284.5H726M721 310.5H726M721 337.5H726M721 363.5H726M214 440.5H689M214 621.5H689M219.5 440V622M688.5 440V622M208 451.5H219M208 475.5H219M208 500.5H219M208 529.5H219M208 562.5H219M208 599.5H219M214 463.5H219M214 487.5H219M214 514.5H219M214 545.5H219M214 580.5H219M220.5 622V627M238.5 622V633M256.5 622V627M274.5 622V627M292.5 622V627M310.5 622V627M328.5 622V627M346.5 622V627M364.5 622V627M382.5 622V627M400.5 622V627M418.5 622V627M436.5 622V627M454.5 622V633M472.5 622V627M490.5 622V627M508.5 622V627M526.5 622V627M544.5 622V627M562.5 622V627M580.5 622V627M598.5 622V627M616.5 622V627M634.5 622V627M652.5 622V627M670.5 622V633M687.5 622V627" stroke="#000" stroke-width="1" fill="none"/>
<text x="454" y="187" text-anchor="middle" textLength="274" lengthAdjust="spacing">RBSP-A/EMFISIS&#160; HFR Spectra Data</text>
<text x="173.6" y="283">10</text><text x="193.4" y="275">5</text>
<text x="173.6" y="384">10</text><text x="193.4" y="376">4</text>
<text transform="translate(161,287.5) rotate(-90)" text-anchor="middle">Hz</text>
<text x="736.5" y="227">10</text><text x="757" y="219">-10</text>
<text x="736.5" y="254">10</text><text x="757" y="246">-12</text>
<text x="736.5" y="280">10</text><text x="757" y="272">-14</text>
<text x="736.5" y="307">10</text><text x="757" y="299">-16</text>
<text x="736.5" y="333">10</text><text x="757" y="325">-18</text>
<text x="736.5" y="360">10</text><text x="757" y="352">-20</text>
<text x="736.5" y="387">10</text><text x="757" y="379">-22</text>
<text transform="translate(805,288) rotate(-90)" text-anchor="middle">V^2/m^2/Hz</text>
<text x="216" y="408" textLength="45.5" lengthAdjust="spacing">00:00</text>
<text x="216" y="425" textLength="91.5" lengthAdjust="spacing">2012-12-02</text>
<text x="431" y="408" textLength="45.5" lengthAdjust="spacing">12:00</text>
<text x="648" y="408" textLength="45.5" lengthAdjust="spacing">00:00</text>
<text x="648" y="425" textLength="91.5" lengthAdjust="spacing">2012-12-03</text>
<text x="295.5" y="414" textLength="315.5" lengthAdjust="spacing">RBSP-A/ECT/HOPE&#160; electron Tperp/Tpar</text>
<text x="202.6" y="457" text-anchor="end">2.2</text>
<text x="202.6" y="481" text-anchor="end">2.0</text>
<text x="202.6" y="506" text-anchor="end">1.8</text>
<text x="202.6" y="535" text-anchor="end">1.6</text>
<text x="202.6" y="568" text-anchor="end">1.4</text>
<text x="202.6" y="605" text-anchor="end">1.2</text>
<text transform="translate(165.4,581.6) rotate(-90)" textLength="100" lengthAdjust="spacing">e Tperp/Tpar</text>
<text x="261" y="653" text-anchor="end">00:00</text>
<text x="261" y="673" text-anchor="end">4.225</text>
<text x="261" y="693" text-anchor="end">-10.580</text>
<text x="261" y="713" text-anchor="end">2.247</text>
<text x="261" y="733" text-anchor="end">4.373</text>
<text x="477.5" y="653" text-anchor="end">12:00</text>
<text x="477.5" y="673" text-anchor="end">5.756</text>
<text x="477.5" y="693" text-anchor="end">-1.544</text>
<text x="477.5" y="713" text-anchor="end">5.398</text>
<text x="477.5" y="733" text-anchor="end">5.760</text>
<text x="693.5" y="653" text-anchor="end">00:00</text>
<text x="693.5" y="673" text-anchor="end">3.179</text>
<text x="693.5" y="693" text-anchor="end">-16.190</text>
<text x="693.5" y="713" text-anchor="end">8.125</text>
<text x="693.5" y="733" text-anchor="end">3.447</text>
<text x="157" y="673">R</text><text x="168.2" y="677.6" font-size="10.5" stroke="none">E</text>
<text x="175" y="693" text-anchor="end">MLat</text>
<text x="175" y="713" text-anchor="end" textLength="31.6" lengthAdjust="spacing">MLT</text>
<text x="174.2" y="733" text-anchor="end">L</text>
<text x="454" y="757" text-anchor="middle" textLength="404" lengthAdjust="spacing">2012-12-01 (336) 23:00 to 2012-12-03 (338) 01:00</text></g>
<path d="M220.5 482V544M221.5 485V515M222.5 486V525M223.5 477V512M224.5 480V516M225.5 465V513M226.5 472V503M227.5 474V499M228.5 465V500M229.5 471V490M230.5 463V490M231.5 463V486M232.5 457V486M233.5 456V494M234.5 462V490M235.5 469V508M236.5 473V507M237.5 485V503M238.5 483V504M239.5 487V504M240.5 494V510M241.5 496V512M242.5 492V519M243.5 504V523M244.5 511V527M245.5 515V535M246.5 523V535M247.5 522V535M248.5 530V540M249.5 527V546M250.5 534V548M251.5 531V549M252.5 534V548M253.5 535V552M254.5 539V552M255.5 541V549M256.5 540V553M257.5 547V557M258.5 554V567M259.5 554V566M260.5 554V566M261.5 554V563M262.5 554V563M263.5 556V561M264.5 552V565M265.5 554V565M266.5 555V566M267.5 559V566M268.5 561V567M269.5 561V568M270.5 562V571M271.5 565V570M272.5 568V573M273.5 569V576M274.5 567V575M275.5 569V579M276.5 571V578M277.5 569V578M278.5 569V577M279.5 570V579M280.5 572V579M281.5 569V582M282.5 570V577M283.5 569V580M284.5 568V581M285.5 568V579M286.5 565V579M287.5 565V579M288.5 569V580M289.5 567V579M290.5 567V576M291.5 567V576M292.5 570V578M293.5 565V577M294.5 565V583M295.5 566V575M296.5 557V576M297.5 556V572M298.5 549V575M299.5 552V571M300.5 552V570M301.5 545V562M302.5 542V567M303.5 542V559M304.5 544V556M305.5 544V557M306.5 544V556M307.5 540V558M308.5 546V554M309.5 542V558M310.5 542V560M311.5 549V562M312.5 544V560M313.5 552V569M314.5 547V568M315.5 548V577M316.5 554V573M317.5 550V565M318.5 542V562M319.5 541V558M320.5 540V552M321.5 528V549M322.5 521V552M323.5 528V540M324.5 522V538M325.5 521V530M326.5 516V529M327.5 507V529M328.5 506V519M329.5 496V521M330.5 488V521M331.5 500V512M332.5 496V520M333.5 494V521M334.5 481V498M335.5 459V496M336.5 468V495M337.5 469V494M338.5 481V500M339.5 471V508M340.5 478V499M341.5 477V496M342.5 477V497M343.5 477V503M344.5 483V500M345.5 476V498M346.5 472V499M347.5 465V502M348.5 475V499M349.5 477V498M350.5 483V501M351.5 477V517M352.5 481V521M353.5 487V524M354.5 503V529M355.5 494V539M356.5 505V531M357.5 498V525M358.5 518V529M359.5 523V558M360.5 554V578M373.5 512V549M374.5 475V517M375.5 487V511M376.5 477V504M377.5 485V496M378.5 484V502M379.5 475V502M380.5 478V498M381.5 472V494M382.5 478V491M383.5 469V498M384.5 477V490M385.5 475V487M386.5 463V492M387.5 464V490M388.5 458V487M389.5 451V488M390.5 459V493M391.5 476V495M392.5 473V502M393.5 491V515M394.5 476V518M395.5 468V493M396.5 448V486M397.5 459V479M398.5 465V482M399.5 465V494M400.5 471V492M401.5 476V500M402.5 483V500M403.5 484V504M404.5 486V502M405.5 488V502M406.5 484V497M407.5 484V502M408.5 485V495M409.5 483V492M410.5 481V489M411.5 473V492M412.5 468V490M413.5 474V486M414.5 476V490M415.5 475V491M416.5 477V494M417.5 481V494M418.5 480V491M419.5 482V498M420.5 483V494M421.5 487V499M422.5 486V500M423.5 488V499M424.5 490V504M425.5 491V505M426.5 491V504M427.5 492V511M428.5 495V511M429.5 497V508M430.5 493V510M431.5 498V509M432.5 494V515M433.5 496V515M434.5 500V510M435.5 499V512M436.5 495V508M437.5 494V513M438.5 497V512M439.5 502V515M440.5 500V516M441.5 496V520M442.5 497V514M443.5 500V510M444.5 500V513M445.5 498V508M446.5 491V505M447.5 490V511M448.5 493V507M449.5 496V512M450.5 496V511M451.5 498V510M452.5 494V515M453.5 499V513M454.5 498V506M455.5 492V506M456.5 492V511M457.5 492V508M458.5 485V499M459.5 473V502M460.5 481V502M461.5 489V500M462.5 492V506M463.5 490V513M464.5 494V511M465.5 502V513M466.5 505V518M467.5 500V523M468.5 506V522M469.5 508V522M470.5 507V527M471.5 505V526M472.5 504V531M473.5 503V522M474.5 496V523M475.5 497V513M476.5 484V515M477.5 492V513M478.5 492V508M479.5 485V507M480.5 495V507M481.5 495V503M482.5 488V511M483.5 495V518M484.5 506V520M485.5 510V520M486.5 504V529M487.5 519V538M488.5 515V558M489.5 514V546M490.5 514V530M491.5 496V533M492.5 492V533M493.5 502V521M494.5 490V514M495.5 495V513M496.5 480V509M497.5 475V521M498.5 489V513M499.5 485V517M500.5 483V508M501.5 480V508M502.5 482V511M503.5 489V510M504.5 485V504M505.5 488V503M506.5 489V500M507.5 482V507M508.5 479V503M509.5 480V498M510.5 459V502M511.5 477V495M512.5 482V512M513.5 486V519M514.5 490V523M515.5 497V524M516.5 495V525M517.5 498V530M518.5 504V528M519.5 511V540M520.5 515V548M521.5 537V550M522.5 548V562M534.5 544V576M535.5 532V550M536.5 496V540M537.5 506V530M538.5 510V522M539.5 506V524M540.5 503V531M541.5 491V514M542.5 481V521M543.5 484V515M544.5 467V517M545.5 483V500M546.5 475V501M547.5 473V513M548.5 478V496M549.5 463V496M550.5 474V498M551.5 481V496M552.5 475V507M553.5 494V516M554.5 498V521M555.5 504V530M556.5 513V542M557.5 523V544M558.5 527V542M559.5 519V550M560.5 521V556M561.5 526V559M562.5 527V571M563.5 543V563M564.5 546V556M565.5 545V560M566.5 542V564M567.5 553V575M568.5 542V591M569.5 553V582M570.5 560V593M571.5 560V595M572.5 571V587M573.5 573V601M574.5 564V606M575.5 578V599M576.5 569V595M577.5 569V598M578.5 571V600M579.5 581V596M580.5 577V600M581.5 579V596M582.5 576V602M583.5 583V603M584.5 584V604M585.5 577V596M586.5 583V598M587.5 577V604M588.5 585V596M589.5 577V605M590.5 584V606M591.5 575V601M592.5 575V606M593.5 575V601M594.5 578V600M595.5 585V602M596.5 584V604M597.5 590V603M598.5 581V613M599.5 580V603M600.5 585V602M601.5 578V607M602.5 585V596M603.5 577V604M604.5 584V599M605.5 577V599M606.5 577V598M607.5 574V598M608.5 569V598M609.5 577V593M610.5 570V592M611.5 571V595M612.5 574V593M613.5 569V592M614.5 571V586M615.5 571V585M616.5 567V584M617.5 571V584M618.5 567V587M619.5 571V585M620.5 569V582M621.5 569V584M622.5 565V581M623.5 564V582M624.5 564V575M625.5 566V576M626.5 561V575M627.5 565V575M628.5 561V573M629.5 556V575M630.5 553V570M631.5 548V565M632.5 545V567M633.5 551V565M634.5 551V568M635.5 544V567M636.5 539V558M637.5 533V552M638.5 525V545M639.5 515V546M640.5 529V556M641.5 529V571M642.5 540V566M643.5 542V576M644.5 548V585M645.5 553V579M646.5 561V583M647.5 550V589M648.5 550V590M649.5 554V582M650.5 559V580M651.5 552V583M652.5 561V579M653.5 562V580M654.5 559V579M655.5 554V587M656.5 552V582M657.5 546V570M658.5 544V564M659.5 527V569M660.5 533V552M661.5 529V557M662.5 523V554M663.5 525V545M664.5 515V552M665.5 513V554M666.5 513V535M667.5 506V531M668.5 488V530M669.5 499V524M670.5 493V595M671.5 490V519M672.5 490V517M673.5 493V516M674.5 492V526M675.5 494V538M676.5 508V523M677.5 496V530M678.5 497V531M679.5 488V533M680.5 491V528M681.5 505V521M682.5 496V544M683.5 519V571M684.5 569V584" fill="none" stroke="#000" stroke-width="1" shape-rendering="crispEdges"/>
</svg></div>
<div class="a" id="dlg"></div><div class="a" id="dlgt"></div><div class="a" id="dlgc"></div>
<svg class="a" style="left:346px;top:359px" width="246" height="26" viewBox="346 359 246 26"><path d="M359.5 369h9l-4.5 5.6z" fill="#9a9a9a"/><path d="M569.4 368.6l7.2 7.4M576.6 368.6l-7.2 7.4" stroke="#a0a0a0" stroke-width="2.4"/></svg>
<svg class="a" style="left:346px;top:359px" width="246" height="89" viewBox="346 359 246 89" font-family="'DejaVu Sans','Liberation Sans',sans-serif" font-weight="bold" fill="#262133"><text x="410.6" y="376.9" font-family="'Liberation Sans','DejaVu Sans',sans-serif" font-size="13.5" fill="#7b7b7b" textLength="116" lengthAdjust="spacing">Progress Monitor</text><text x="469.2" y="397" font-size="14" text-anchor="middle">running batch</text><text x="362.8" y="409" font-size="8" textLength="214.5" lengthAdjust="spacing">write /hom...walk3/product_20121215_00.png</text><text x="376.2" y="442.6" font-size="11" textLength="186" lengthAdjust="spacing">29/62 (48.7/min, eta 41.9 s)</text></svg>
<div class="a" style="left:349px;top:411px;width:219px;height:19px;background:#eeeeee;border:1px solid #7a8a99;border-top-color:#6382bf;border-left-color:#6382bf;box-sizing:content-box;width:218px;height:18px"></div>
<div class="a" style="left:350px;top:412px;width:100px;height:18px;background:#a3b8cc"></div>
<div class="a btn" style="left:570px;top:411px;width:19px;height:20px;border-color:#a3b8cc;background:linear-gradient(#dbe6f2,#f4f8fc 50%,#c8ddf2)"></div>
<svg class="a" style="left:570px;top:411px" width="19" height="20"><defs><linearGradient id="rg" x1="0" y1="0" x2="0" y2="1"><stop offset="0" stop-color="#f0646e"/><stop offset="1" stop-color="#d62a36"/></linearGradient></defs><rect x="2.5" y="3.5" width="13" height="13" rx="3" fill="url(#rg)" stroke="#b5202c" stroke-width="1"/><path d="M6.7 7.7l4.6 4.6M11.3 7.7l-4.6 4.6" stroke="#fff" stroke-width="2.1" stroke-linecap="round"/></svg>
</body></html>
